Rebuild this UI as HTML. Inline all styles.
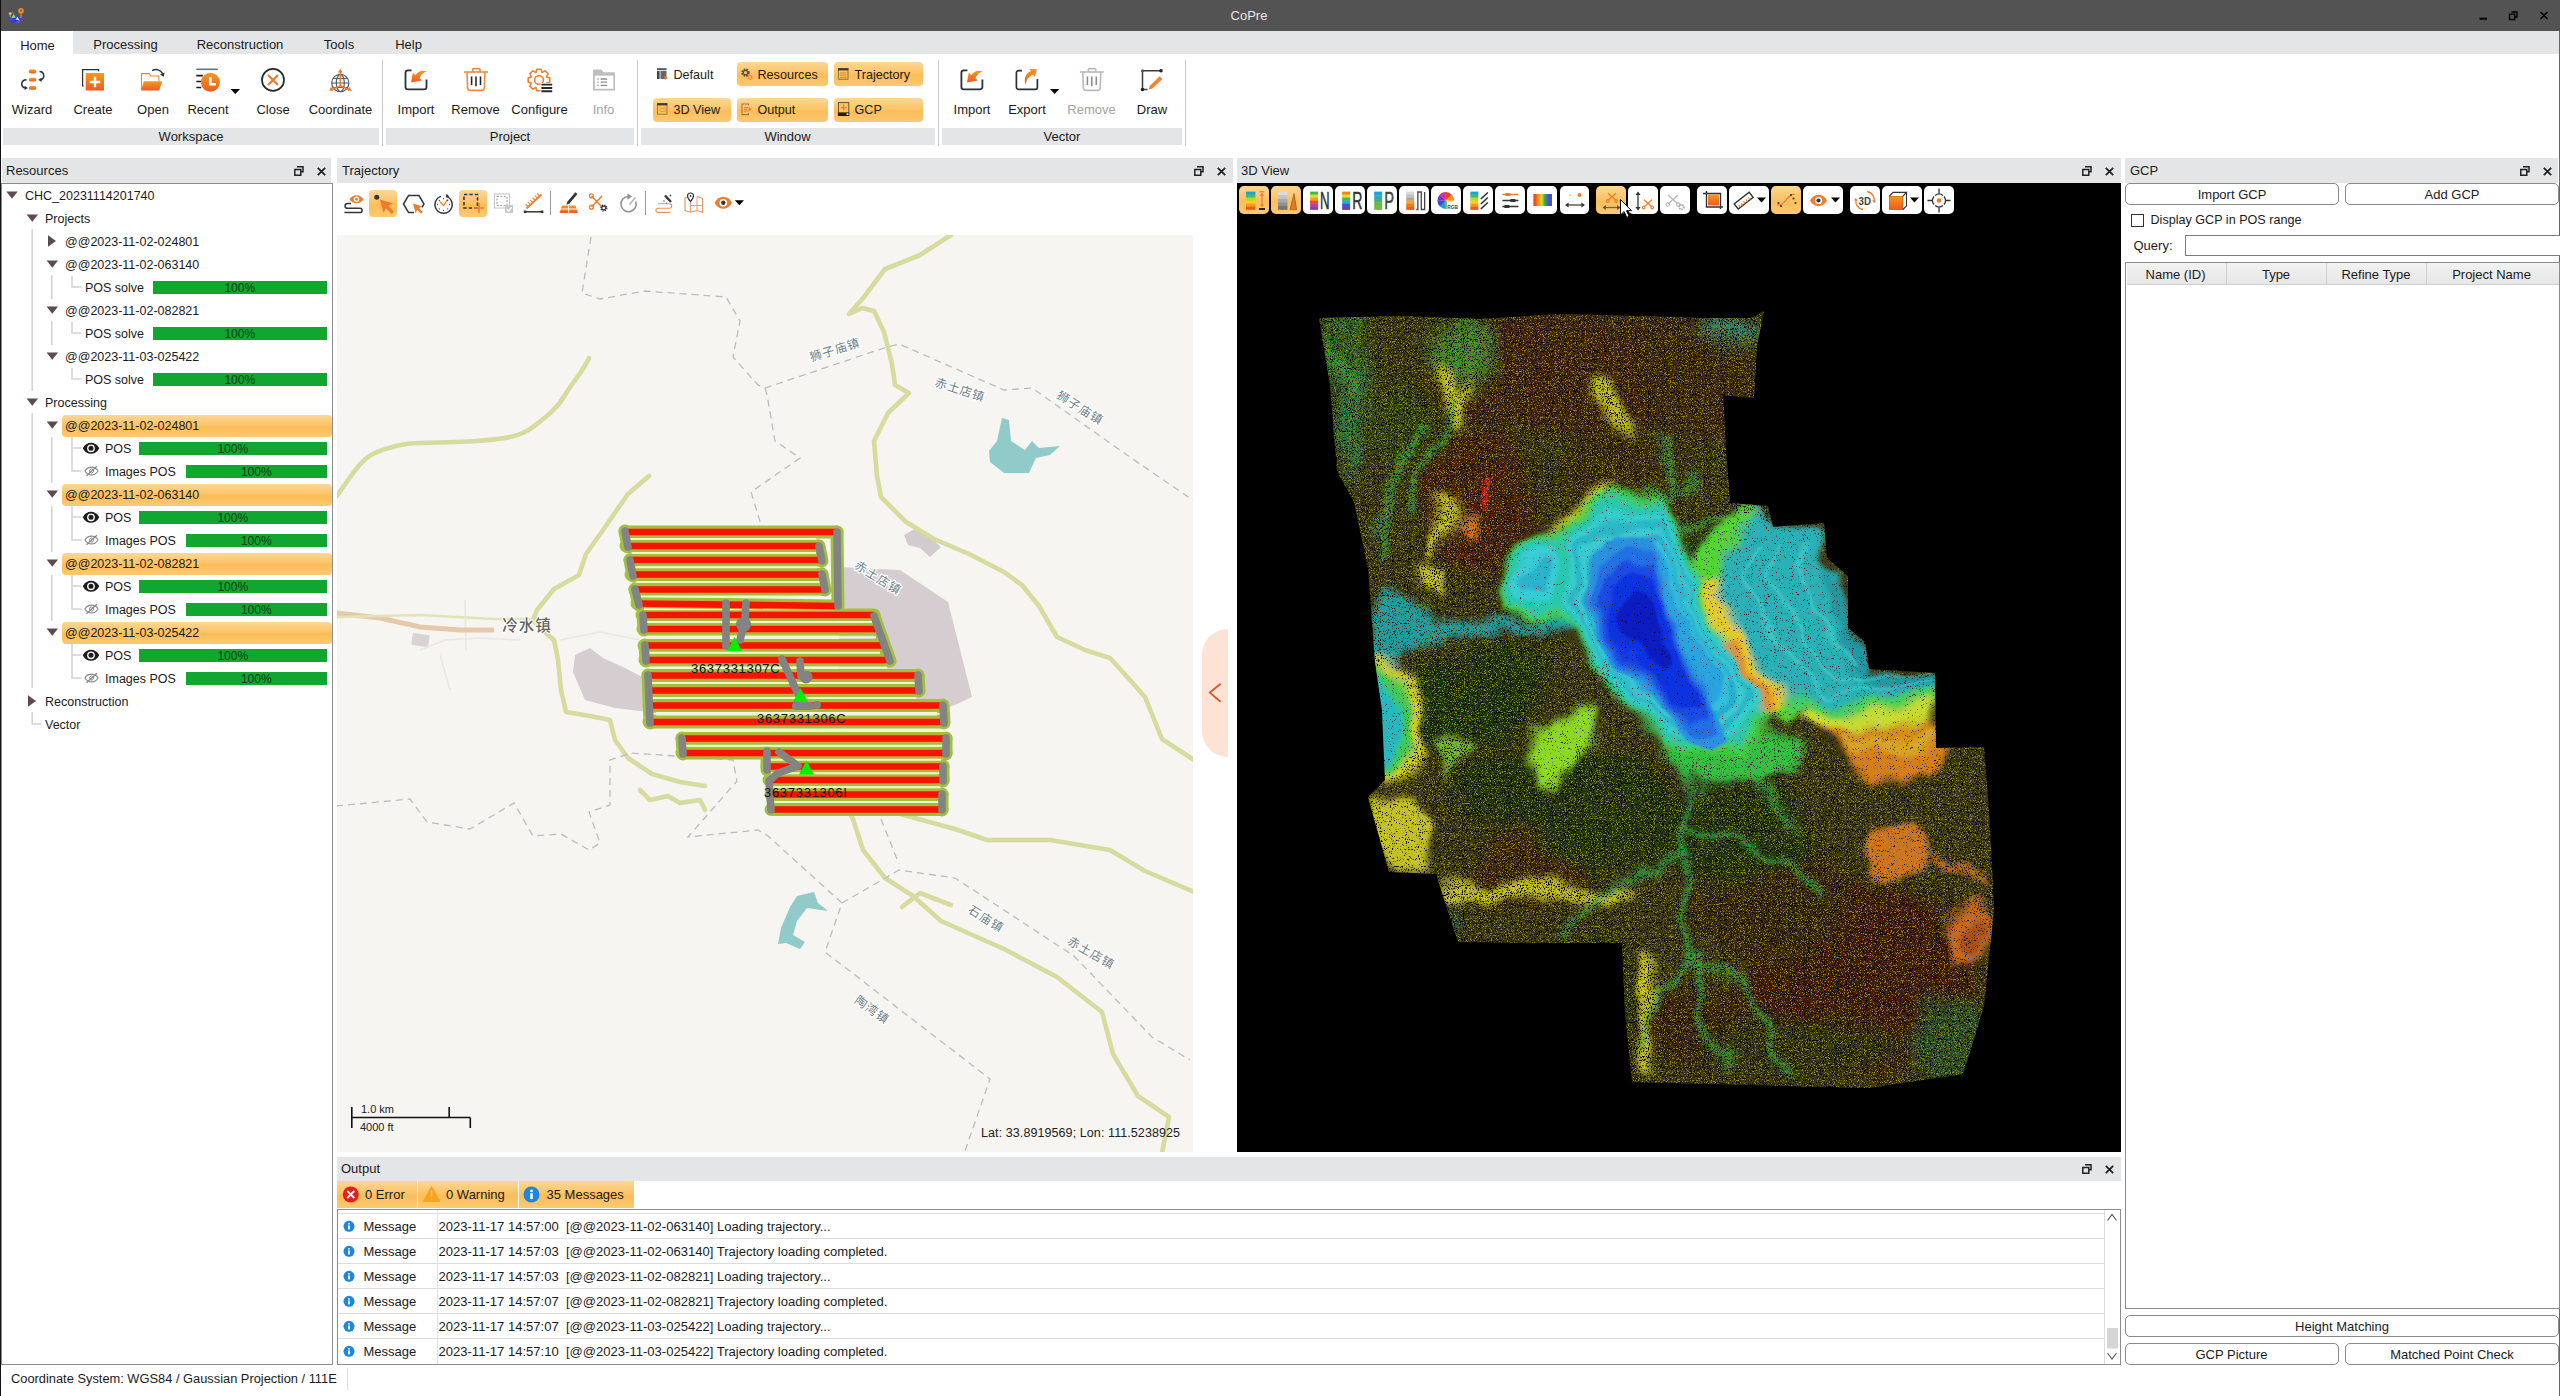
<!DOCTYPE html>
<html lang="en"><head><meta charset="utf-8"><title>CoPre</title>
<style>
html,body{margin:0;padding:0;}
html,body{width:2560px;height:1396px;overflow:hidden;}
body{background:#fff;font-family:"Liberation Sans","Noto Sans CJK SC",sans-serif;font-size:13px;color:#1b1b1b;}
#root{position:relative;left:0;top:0;width:2560px;height:1396px;overflow:hidden;background:#fff;}
div{position:absolute;box-sizing:border-box;}
svg{position:absolute;overflow:visible;}
.t{white-space:pre;}
.or{background:linear-gradient(#fdd796 0%,#fcc469 45%,#fbbd58 55%,#fcc973 100%);border-radius:4px;}
.btn{border:1px solid #8a8a8a;border-radius:5px;background:#fff;text-align:center;}
</style></head>
<body>
<div id="root">
<div style="left:0px;top:0px;width:2560px;height:30.5px;background:#535353;"></div><div class="t" style="left:1049px;width:400px;text-align:center;top:6px;height:20px;line-height:20px;font-size:13px;color:#e6e6e6;">CoPre</div><svg style="left:2470px;top:4px" width="86" height="24" viewBox="0 0 86 24"><path d="M9.5 14.7h7.5" stroke="#000" stroke-width="2"/><path d="M41.5 8h5.5v5h-2M39.5 10.2h5.3v5.3h-5.3z" fill="none" stroke="#000" stroke-width="1.3"/><path d="M70.5 8l7 7M77.5 8l-7 7" stroke="#000" stroke-width="1.5"/></svg><svg style="left:6px;top:6px" width="22" height="20" viewBox="6 6 22 20"><defs><linearGradient id="ai" x1="0" y1="0" x2="1" y2="1"><stop offset="0" stop-color="#3a6ae8"/><stop offset="0.6" stop-color="#3038d0"/><stop offset="1" stop-color="#9a70f0"/></linearGradient></defs><path d="M8 19.5L12.5 15.5L15 17L18 15.5L23.5 19L18.5 23L12 22.5Z" fill="url(#ai)"/><path d="M11.5 18L13.6 14L15.6 17.5Z" fill="#8fe08a"/><path d="M15.5 19.5L17.6 16.8L19.6 20.5Z" fill="#bfe4ff"/><circle cx="21" cy="10.8" r="2.9" fill="#e8862e"/><circle cx="21" cy="10.6" r="1" fill="#8a5a30"/><path d="M21 13v5" stroke="#e8862e" stroke-width="1.3"/><circle cx="10.2" cy="13.6" r="1.6" fill="#d89a5a"/><circle cx="10.2" cy="13.6" r="0.6" fill="#fff"/><path d="M10.2 15v2" stroke="#d89a5a" stroke-width="0.9"/><path d="M12.5 11.5l1.5 3" stroke="#4a9a3a" stroke-width="1"/></svg><div style="left:0px;top:31px;width:2560px;height:23px;background:#e4e5e6;"></div><div style="left:1px;top:30.5px;width:71.7px;height:23.5px;background:#fff;"></div><div class="t" style="left:-162.5px;width:400px;text-align:center;top:35.5px;height:20px;line-height:20px;font-size:13px;color:#1b1b1b;">Home</div><div class="t" style="left:-74.5px;width:400px;text-align:center;top:34.5px;height:20px;line-height:20px;font-size:13px;color:#1b1b1b;">Processing</div><div class="t" style="left:40px;width:400px;text-align:center;top:34.5px;height:20px;line-height:20px;font-size:13px;color:#1b1b1b;">Reconstruction</div><div class="t" style="left:139px;width:400px;text-align:center;top:34.5px;height:20px;line-height:20px;font-size:13px;color:#1b1b1b;">Tools</div><div class="t" style="left:208.5px;width:400px;text-align:center;top:34.5px;height:20px;line-height:20px;font-size:13px;color:#1b1b1b;">Help</div><div style="left:0px;top:0px;width:1px;height:1396px;background:#111;"></div><div style="left:2559px;top:30.5px;width:1px;height:1365.5px;background:#666;"></div>
<div style="left:3px;top:128px;width:376px;height:17px;background:#e4e5e6;"></div><div class="t" style="left:-9px;width:400px;text-align:center;top:126.5px;height:20px;line-height:20px;font-size:13px;color:#1b1b1b;">Workspace</div><div style="left:386px;top:128px;width:248px;height:17px;background:#e4e5e6;"></div><div class="t" style="left:310px;width:400px;text-align:center;top:126.5px;height:20px;line-height:20px;font-size:13px;color:#1b1b1b;">Project</div><div style="left:641px;top:128px;width:294px;height:17px;background:#e4e5e6;"></div><div class="t" style="left:587.5px;width:400px;text-align:center;top:126.5px;height:20px;line-height:20px;font-size:13px;color:#1b1b1b;">Window</div><div style="left:942px;top:128px;width:240px;height:17px;background:#e4e5e6;"></div><div class="t" style="left:862px;width:400px;text-align:center;top:126.5px;height:20px;line-height:20px;font-size:13px;color:#1b1b1b;">Vector</div><div style="left:382px;top:60px;width:1px;height:86px;background:#c9c9c9;"></div><div style="left:637px;top:60px;width:1px;height:86px;background:#c9c9c9;"></div><div style="left:938px;top:60px;width:1px;height:86px;background:#c9c9c9;"></div><div style="left:1185px;top:60px;width:1px;height:86px;background:#c9c9c9;"></div><div class="t" style="left:-168px;width:400px;text-align:center;top:99.5px;height:20px;line-height:20px;font-size:13px;color:#1b1b1b;">Wizard</div><div class="t" style="left:-107px;width:400px;text-align:center;top:99.5px;height:20px;line-height:20px;font-size:13px;color:#1b1b1b;">Create</div><div class="t" style="left:-47px;width:400px;text-align:center;top:99.5px;height:20px;line-height:20px;font-size:13px;color:#1b1b1b;">Open</div><div class="t" style="left:8px;width:400px;text-align:center;top:99.5px;height:20px;line-height:20px;font-size:13px;color:#1b1b1b;">Recent</div><div class="t" style="left:73px;width:400px;text-align:center;top:99.5px;height:20px;line-height:20px;font-size:13px;color:#1b1b1b;">Close</div><div class="t" style="left:140.5px;width:400px;text-align:center;top:99.5px;height:20px;line-height:20px;font-size:13px;color:#1b1b1b;">Coordinate</div><div class="t" style="left:216px;width:400px;text-align:center;top:99.5px;height:20px;line-height:20px;font-size:13px;color:#1b1b1b;">Import</div><div class="t" style="left:275.5px;width:400px;text-align:center;top:99.5px;height:20px;line-height:20px;font-size:13px;color:#1b1b1b;">Remove</div><div class="t" style="left:339.5px;width:400px;text-align:center;top:99.5px;height:20px;line-height:20px;font-size:13px;color:#1b1b1b;">Configure</div><div class="t" style="left:403.5px;width:400px;text-align:center;top:99.5px;height:20px;line-height:20px;font-size:13px;color:#a3a3a3;">Info</div><div class="t" style="left:772px;width:400px;text-align:center;top:99.5px;height:20px;line-height:20px;font-size:13px;color:#1b1b1b;">Import</div><div class="t" style="left:827px;width:400px;text-align:center;top:99.5px;height:20px;line-height:20px;font-size:13px;color:#1b1b1b;">Export</div><div class="t" style="left:891.5px;width:400px;text-align:center;top:99.5px;height:20px;line-height:20px;font-size:13px;color:#a3a3a3;">Remove</div><div class="t" style="left:952px;width:400px;text-align:center;top:99.5px;height:20px;line-height:20px;font-size:13px;color:#1b1b1b;">Draw</div><div class="or" style="left:737px;top:62px;width:91px;height:24px;"></div><div class="or" style="left:834px;top:62px;width:89px;height:24px;"></div><div class="or" style="left:653px;top:97.5px;width:78px;height:24px;"></div><div class="or" style="left:737px;top:97.5px;width:91px;height:24px;"></div><div class="or" style="left:834px;top:97.5px;width:89px;height:24px;"></div><div class="t" style="left:673.5px;top:64.5px;height:20px;line-height:20px;font-size:12.6px;color:#1b1b1b;">Default</div><div class="t" style="left:757.5px;top:64.5px;height:20px;line-height:20px;font-size:12.6px;color:#1b1b1b;">Resources</div><div class="t" style="left:854.5px;top:64.5px;height:20px;line-height:20px;font-size:12.6px;color:#1b1b1b;">Trajectory</div><div class="t" style="left:673.5px;top:99.5px;height:20px;line-height:20px;font-size:12.6px;color:#1b1b1b;">3D View</div><div class="t" style="left:757.5px;top:99.5px;height:20px;line-height:20px;font-size:12.6px;color:#1b1b1b;">Output</div><div class="t" style="left:854.5px;top:99.5px;height:20px;line-height:20px;font-size:12.6px;color:#1b1b1b;">GCP</div><svg style="left:0;top:55px" width="1200" height="72" viewBox="0 55 1200 72"><defs><linearGradient id="og" x1="0" y1="0" x2="0" y2="1"><stop offset="0" stop-color="#f39a1f"/><stop offset="1" stop-color="#f15a22"/></linearGradient></defs><rect x="28.8" y="69.6" width="7.6" height="3.8" rx="1.9" fill="url(#og)"/><rect x="28.8" y="77.8" width="7.6" height="3.8" rx="1.9" fill="url(#og)"/><rect x="28.8" y="86" width="7.6" height="3.8" rx="1.9" fill="url(#og)"/><path d="M39.5 71.6c5.5 0.2 5.8 8 0.3 8.2" fill="none" stroke="#2b2f36" stroke-width="1.5"/><path d="M38.3 79.8l3.2-2.1v4.2z" fill="#2b2f36"/><path d="M26.6 79.7c-6.2 0.2-6.4 8-1.2 8.2" fill="none" stroke="#2b2f36" stroke-width="1.5"/><path d="M27.8 87.9l-3.2-2.1v4.2z" fill="#2b2f36"/><path d="M83.8 86H82.6V69.6h16v1.6" fill="none" stroke="#2b2f36" stroke-width="1.2"/><rect x="85.7" y="73" width="18.3" height="17.5" fill="url(#og)"/><path d="M95 76.8v10.4M89.8 82h10.4" stroke="#fff" stroke-width="2.4"/><path d="M141.5 90.2V73.6h7.6l1.8 2.4h8v5" fill="#fff" stroke="#e9892c" stroke-width="1.1"/><path d="M141.2 90.4l2.6-9.2h18.4l-3 9.2z" fill="url(#og)"/><path d="M152.2 70.6c4-2.2 8.4-0.8 10.4 3" fill="none" stroke="#2b2f36" stroke-width="1.5"/><path d="M164.6 72.6l-0.8 4.2-3.8-2.2z" fill="#2b2f36"/><path d="M196.3 69.3h21.5" stroke="#6b7178" stroke-width="1.6"/><path d="M196.3 75.6h6.5M196.3 81.5h5M196.3 87.5h5" stroke="#1b1b1b" stroke-width="1.6"/><circle cx="210.4" cy="82.3" r="9.5" fill="url(#og)"/><path d="M210.3 77v7.2h5.6" fill="none" stroke="#fff" stroke-width="2.6"/><path d="M230.6 89h9.4l-4.7 5z" fill="#000"/><circle cx="273" cy="79.9" r="11" fill="none" stroke="#26282c" stroke-width="1.7"/><path d="M268 75l10 10M278 75l-10 10" stroke="#f0792a" stroke-width="2.2"/><g fill="none" stroke="#515c6b" stroke-width="1.2"><circle cx="340.3" cy="83" r="8.6"/><ellipse cx="340.3" cy="83" rx="4" ry="8.6"/><path d="M331.8 83h17M333 78.5h14.6M333 87.5h14.6"/></g><g stroke="#f0792a" stroke-width="1.6" fill="#f0792a"><path d="M340.3 86V71"/><path d="M340.3 69l2.4 3.6h-4.8z" stroke="none"/><path d="M340.3 86l-9 3.6"/><path d="M329 90.6l2.2-3.8 1.8 4.2z" stroke="none"/><path d="M340.3 86l9 3.6"/><path d="M351.6 90.6l-2.2-3.8-1.8 4.2z" stroke="none"/></g><path d="M411.5 70.4h-3.6a2.4 2.4 0 0 0-2.4 2.4v14.2a2.4 2.4 0 0 0 2.4 2.4h16.2a2.4 2.4 0 0 0 2.4-2.4V79.5" fill="none" stroke="#2b2f36" stroke-width="1.8"/><path d="M411.1 82.6L412.8 72.6L415.4 75.2C418 71 422.5 69.6 426.8 71.6C423 72.6 420.8 75 419.6 78.3L422 80.5Z" fill="url(#og)"/><path d="M967.4 70.4h-3.6a2.4 2.4 0 0 0-2.4 2.4v14.2a2.4 2.4 0 0 0 2.4 2.4h16.2a2.4 2.4 0 0 0 2.4-2.4V79.5" fill="none" stroke="#2b2f36" stroke-width="1.8"/><path d="M967 82.6L968.7 72.6L971.3 75.2C973.9 71 978.4 69.6 982.7 71.6C978.9 72.6 976.7 75 975.5 78.3L977.9 80.5Z" fill="url(#og)"/><path d="M1022 70.6h-3.4a2.2 2.2 0 0 0-2.2 2.2v14.4a2.2 2.2 0 0 0 2.2 2.2h16.6a2.2 2.2 0 0 0 2.2-2.2V79" fill="none" stroke="#2b2f36" stroke-width="1.7"/><path d="M1037 69.2l-7.8-0.4 1.6 2.2c-4.6 2-7.8 7-5 14 0.4-5.4 3-8.6 7.4-10.4l1.6 2.4z" fill="url(#og)"/><path d="M1050 89h9.2l-4.6 4.9z" fill="#000"/><g fill="none" stroke="#ee8a3a" stroke-width="1.6"><path d="M464 72h24"/><path d="M472.6 72v-2.2a1.2 1.2 0 0 1 1.2-1.2h5a1.2 1.2 0 0 1 1.2 1.2V72"/><path d="M467 72l0.6 16a2.6 2.6 0 0 0 2.6 2.4h11.6a2.6 2.6 0 0 0 2.6-2.4l0.6-16"/></g><path d="M471.6 76.6v8.4M476 76.6v9.6M480.5 76.6v8.4" stroke="#26282c" stroke-width="1.6"/><g fill="none" stroke="#b9b9b9" stroke-width="1.6"><path d="M1079.8 72h24"/><path d="M1088.4 72v-2.2a1.2 1.2 0 0 1 1.2-1.2h5a1.2 1.2 0 0 1 1.2 1.2V72"/><path d="M1082.8 72l0.6 16a2.6 2.6 0 0 0 2.6 2.4h11.6a2.6 2.6 0 0 0 2.6-2.4l0.6-16"/></g><path d="M1087.4 76.6v8.4M1091.8 76.6v9.6M1096.3 76.6v8.4" stroke="#8e8e8e" stroke-width="1.6"/><clipPath id="gc"><path d="M520 60h40v23h-19.5v12H520z"/></clipPath><g clip-path="url(#gc)"><path d="M549.8 77.8 L549.8 82.2 L546.8 82.9 L546.6 83.4 L548.2 86.1 L545.1 89.2 L542.4 87.6 L541.9 87.8 L541.2 90.8 L536.8 90.8 L536.1 87.8 L535.6 87.6 L532.9 89.2 L529.8 86.1 L531.4 83.4 L531.2 82.9 L528.2 82.2 L528.2 77.8 L531.2 77.1 L531.4 76.6 L529.8 73.9 L532.9 70.8 L535.6 72.4 L536.1 72.2 L536.8 69.2 L541.2 69.2 L541.9 72.2 L542.4 72.4 L545.1 70.8 L548.2 73.9 L546.6 76.6 L546.8 77.1Z" fill="none" stroke="#ee8530" stroke-width="1.6" stroke-linejoin="round"/><circle cx="539" cy="80" r="4.4" fill="none" stroke="#ee8530" stroke-width="1.6"/></g><path d="M541.4 84.6h10.8M541.4 88h10.8M541.4 91.3h10.8" stroke="#26282c" stroke-width="1.9"/><path d="M593 90.6V70.6a1 1 0 0 1 1-1h7.4l2 2.6h10.6a1 1 0 0 1 1 1v17.4z" fill="#bdbdbd"/><rect x="594.8" y="75.6" width="18.6" height="13.2" fill="#fff"/><path d="M600.6 79h6.6M600.6 82.2h6.6M600.6 85.4h6.6" stroke="#8e8e8e" stroke-width="1.3"/><path d="M597.4 79h1.2M597.4 82.2h1.2M597.4 85.4h1.2" stroke="#8e8e8e" stroke-width="1.3"/><path d="M1161 70.8h-18.5v18.7h5" fill="none" stroke="#3a3d42" stroke-width="1.5"/><circle cx="1161" cy="70.8" r="1.8" fill="#222"/><circle cx="1142.5" cy="70.8" r="1.5" fill="#555"/><circle cx="1142.5" cy="89.5" r="1.8" fill="#222"/><path d="M1159.6 76.2l2.8 2.8-10 9.6-3.6 1 0.9-3.6z" fill="#ee8530"/><rect x="657" y="68.2" width="9.5" height="2" fill="#555"/><rect x="657" y="71" width="2.6" height="8" fill="#444"/><rect x="660.5" y="71" width="6" height="8" fill="#666"/><path d="M664 76l4 2-3 2z" fill="#f0792a"/><circle cx="745.5" cy="72.6" r="3.1" fill="none" stroke="#5b5345" stroke-width="2.2" stroke-dasharray="1.6 0.9"/><circle cx="745.5" cy="72.6" r="2.2" fill="none" stroke="#5b5345" stroke-width="1.2"/><circle cx="750" cy="77.2" r="1.8" fill="none" stroke="#f0792a" stroke-width="1.5" stroke-dasharray="1.1 0.7"/><rect x="838.4" y="68.6" width="9.6" height="10.6" fill="#fbc15c" stroke="#7a6a4a" stroke-width="0.9"/><rect x="838" y="68.2" width="10.4" height="2.2" fill="#3a3a3a"/><path d="M840 73h6.4M840 75.2h6.4M840 77.4h6.4" stroke="#f0792a" stroke-width="0.9"/><rect x="657.4" y="103.6" width="9.6" height="10.6" fill="#fbc15c" stroke="#8a744a" stroke-width="0.9"/><rect x="657" y="103.2" width="10.4" height="2.2" fill="#3a3a3a"/><path d="M659.5 110.5c0-2 2-3 3.5-2 1.5-1.2 3.2 0 3 1.8 0 1.6-6.5 1.8-6.5 0.2z" fill="none" stroke="#e58a2a" stroke-width="0.9"/><path d="M748.5 105.5V104h-6.5v10.6h6.5v-1.6" fill="none" stroke="#9a7a42" stroke-width="1.1"/><path d="M744 107.5h4M744 109.3h3M744 111.1h4" stroke="#f0792a" stroke-width="1"/><path d="M748.6 107l3 2.3-3 2.3z" fill="#f0792a"/><rect x="838.4" y="102.6" width="10.4" height="13" fill="#fbc15c" stroke="#5a4a32" stroke-width="0.9"/><rect x="838" y="112.4" width="11.2" height="3.6" fill="#1f1f1f"/><rect x="846.6" y="113.4" width="1.8" height="1.6" fill="#fff"/><path d="M843.6 104.6v6M840.8 107.6h5.6" stroke="#f0792a" stroke-width="1.1"/></svg>
<div style="left:2px;top:158px;width:329px;height:25px;background:#e4e5e6;"></div><div class="t" style="left:6px;top:160.5px;height:20px;line-height:20px;font-size:13px;color:#1b1b1b;">Resources</div><svg style="left:294px;top:165.5px" width="10" height="10" viewBox="0 0 10 10"><path d="M3 0.8h6v5h-2.2M0.8 3.6h6v5.6h-6z" fill="none" stroke="#222" stroke-width="1.5"/></svg><svg style="left:317px;top:166.5px" width="9" height="9" viewBox="0 0 9 9"><path d="M0.8 0.8L8.2 8.2M8.2 0.8L0.8 8.2" stroke="#222" stroke-width="1.8"/></svg><div style="left:1px;top:183px;width:332px;height:1182px;border:1px solid #8c8c8c;background:#fff;"></div><div class="or" style="left:62px;top:414.5px;width:270px;height:22px;"></div><div class="or" style="left:62px;top:483.5px;width:270px;height:22px;"></div><div class="or" style="left:62px;top:552.5px;width:270px;height:22px;"></div><div class="or" style="left:62px;top:621.5px;width:270px;height:22px;"></div><svg style="left:0;top:183px" width="335" height="560" viewBox="0 183 335 560"><g stroke="#d2d2d2" stroke-width="1.5" fill="none"><path d="M32.2 229v162"/><path d="M32.2 413v275"/><path d="M32.2 712v12h9"/><path d="M51.8 275v24"/><path d="M51.8 321v24"/><path d="M72 276v11h9.5"/><path d="M72 322v11h9.5"/><path d="M72 368v11h9.5"/><path d="M51.8 437v46"/><path d="M51.8 506v46"/><path d="M51.8 575v46"/><path d="M72 437v34h9.5M72 448h9.5"/><path d="M72 506v34h9.5M72 517h9.5"/><path d="M72 575v34h9.5M72 586h9.5"/><path d="M72 644v34h9.5M72 655h9.5"/></g><path d="M6.3 191.4h11.4l-5.7 7.4z" fill="#5c4a4f"/><path d="M26.599999999999998 214.4h11.4l-5.7 7.4z" fill="#5c4a4f"/><path d="M48 235.2v11.6l8-5.8z" fill="#5c4a4f"/><path d="M46.599999999999994 260.4h11.4l-5.7 7.4z" fill="#5c4a4f"/><path d="M46.599999999999994 306.4h11.4l-5.7 7.4z" fill="#5c4a4f"/><path d="M46.599999999999994 352.4h11.4l-5.7 7.4z" fill="#5c4a4f"/><path d="M26.599999999999998 398.4h11.4l-5.7 7.4z" fill="#5c4a4f"/><path d="M46.599999999999994 421.4h11.4l-5.7 7.4z" fill="#5c4a4f"/><path d="M46.599999999999994 490.4h11.4l-5.7 7.4z" fill="#5c4a4f"/><path d="M46.599999999999994 559.4h11.4l-5.7 7.4z" fill="#5c4a4f"/><path d="M46.599999999999994 628.4h11.4l-5.7 7.4z" fill="#5c4a4f"/><path d="M28 695.2v11.6l8-5.8z" fill="#5c4a4f"/><path d="M82.8 448.3c3.5-7.4 12.9-7.4 16.4 0c-3.5 7.4-12.9 7.4-16.4 0z" fill="#1c1c1c"/><circle cx="91" cy="448.3" r="3.9" fill="#fff"/><circle cx="91" cy="448.3" r="2.5" fill="#1c1c1c"/><path d="M84.9 471c3-5.2 10.2-5.2 13.2 0c-3 5.2-10.2 5.2-13.2 0z" fill="none" stroke="#8a8a8a" stroke-width="1.1"/><circle cx="91.5" cy="471" r="2" fill="none" stroke="#8a8a8a" stroke-width="1"/><path d="M86.5 475.8L96.9 466.2" stroke="#8a8a8a" stroke-width="1.2"/><path d="M82.8 517.3c3.5-7.4 12.9-7.4 16.4 0c-3.5 7.4-12.9 7.4-16.4 0z" fill="#1c1c1c"/><circle cx="91" cy="517.3" r="3.9" fill="#fff"/><circle cx="91" cy="517.3" r="2.5" fill="#1c1c1c"/><path d="M84.9 540c3-5.2 10.2-5.2 13.2 0c-3 5.2-10.2 5.2-13.2 0z" fill="none" stroke="#8a8a8a" stroke-width="1.1"/><circle cx="91.5" cy="540" r="2" fill="none" stroke="#8a8a8a" stroke-width="1"/><path d="M86.5 544.8L96.9 535.2" stroke="#8a8a8a" stroke-width="1.2"/><path d="M82.8 586.3c3.5-7.4 12.9-7.4 16.4 0c-3.5 7.4-12.9 7.4-16.4 0z" fill="#1c1c1c"/><circle cx="91" cy="586.3" r="3.9" fill="#fff"/><circle cx="91" cy="586.3" r="2.5" fill="#1c1c1c"/><path d="M84.9 609c3-5.2 10.2-5.2 13.2 0c-3 5.2-10.2 5.2-13.2 0z" fill="none" stroke="#8a8a8a" stroke-width="1.1"/><circle cx="91.5" cy="609" r="2" fill="none" stroke="#8a8a8a" stroke-width="1"/><path d="M86.5 613.8L96.9 604.2" stroke="#8a8a8a" stroke-width="1.2"/><path d="M82.8 655.3c3.5-7.4 12.9-7.4 16.4 0c-3.5 7.4-12.9 7.4-16.4 0z" fill="#1c1c1c"/><circle cx="91" cy="655.3" r="3.9" fill="#fff"/><circle cx="91" cy="655.3" r="2.5" fill="#1c1c1c"/><path d="M84.9 678c3-5.2 10.2-5.2 13.2 0c-3 5.2-10.2 5.2-13.2 0z" fill="none" stroke="#8a8a8a" stroke-width="1.1"/><circle cx="91.5" cy="678" r="2" fill="none" stroke="#8a8a8a" stroke-width="1"/><path d="M86.5 682.8L96.9 673.2" stroke="#8a8a8a" stroke-width="1.2"/></svg><div class="t" style="left:25px;top:185.9px;height:20px;line-height:20px;font-size:12.5px;color:#1b1b1b;">CHC_20231114201740</div><div class="t" style="left:45px;top:208.9px;height:20px;line-height:20px;font-size:12.5px;color:#1b1b1b;">Projects</div><div class="t" style="left:65px;top:231.9px;height:20px;line-height:20px;font-size:12.5px;color:#1b1b1b;">@@2023-11-02-024801</div><div class="t" style="left:65px;top:254.89999999999998px;height:20px;line-height:20px;font-size:12.5px;color:#1b1b1b;">@@2023-11-02-063140</div><div class="t" style="left:85px;top:278.4px;height:20px;line-height:20px;font-size:12.5px;color:#1b1b1b;">POS solve</div><div style="left:152.5px;top:280.5px;width:174.5px;height:13px;background:#10a62f;"></div><div class="t" style="left:39.75px;width:400px;text-align:center;top:277.5px;height:20px;line-height:20px;font-size:12px;color:#0a3a14;">100%</div><div class="t" style="left:65px;top:300.9px;height:20px;line-height:20px;font-size:12.5px;color:#1b1b1b;">@@2023-11-02-082821</div><div class="t" style="left:85px;top:324.4px;height:20px;line-height:20px;font-size:12.5px;color:#1b1b1b;">POS solve</div><div style="left:152.5px;top:326.5px;width:174.5px;height:13px;background:#10a62f;"></div><div class="t" style="left:39.75px;width:400px;text-align:center;top:323.5px;height:20px;line-height:20px;font-size:12px;color:#0a3a14;">100%</div><div class="t" style="left:65px;top:346.9px;height:20px;line-height:20px;font-size:12.5px;color:#1b1b1b;">@@2023-11-03-025422</div><div class="t" style="left:85px;top:370.4px;height:20px;line-height:20px;font-size:12.5px;color:#1b1b1b;">POS solve</div><div style="left:152.5px;top:372.5px;width:174.5px;height:13px;background:#10a62f;"></div><div class="t" style="left:39.75px;width:400px;text-align:center;top:369.5px;height:20px;line-height:20px;font-size:12px;color:#0a3a14;">100%</div><div class="t" style="left:45px;top:392.9px;height:20px;line-height:20px;font-size:12.5px;color:#1b1b1b;">Processing</div><div class="t" style="left:65px;top:415.9px;height:20px;line-height:20px;font-size:12.5px;color:#1b1b1b;">@@2023-11-02-024801</div><div class="t" style="left:105px;top:439.4px;height:20px;line-height:20px;font-size:12.5px;color:#1b1b1b;">POS</div><div style="left:138.5px;top:441.5px;width:188.5px;height:13px;background:#10a62f;"></div><div class="t" style="left:32.75px;width:400px;text-align:center;top:438.5px;height:20px;line-height:20px;font-size:12px;color:#0a3a14;">100%</div><div class="t" style="left:105px;top:462.4px;height:20px;line-height:20px;font-size:12.5px;color:#1b1b1b;">Images POS</div><div style="left:185.5px;top:464.5px;width:141.5px;height:13px;background:#10a62f;"></div><div class="t" style="left:56.25px;width:400px;text-align:center;top:461.5px;height:20px;line-height:20px;font-size:12px;color:#0a3a14;">100%</div><div class="t" style="left:65px;top:484.9px;height:20px;line-height:20px;font-size:12.5px;color:#1b1b1b;">@@2023-11-02-063140</div><div class="t" style="left:105px;top:508.4px;height:20px;line-height:20px;font-size:12.5px;color:#1b1b1b;">POS</div><div style="left:138.5px;top:510.5px;width:188.5px;height:13px;background:#10a62f;"></div><div class="t" style="left:32.75px;width:400px;text-align:center;top:507.5px;height:20px;line-height:20px;font-size:12px;color:#0a3a14;">100%</div><div class="t" style="left:105px;top:531.4px;height:20px;line-height:20px;font-size:12.5px;color:#1b1b1b;">Images POS</div><div style="left:185.5px;top:533.5px;width:141.5px;height:13px;background:#10a62f;"></div><div class="t" style="left:56.25px;width:400px;text-align:center;top:530.5px;height:20px;line-height:20px;font-size:12px;color:#0a3a14;">100%</div><div class="t" style="left:65px;top:553.9px;height:20px;line-height:20px;font-size:12.5px;color:#1b1b1b;">@@2023-11-02-082821</div><div class="t" style="left:105px;top:577.4px;height:20px;line-height:20px;font-size:12.5px;color:#1b1b1b;">POS</div><div style="left:138.5px;top:579.5px;width:188.5px;height:13px;background:#10a62f;"></div><div class="t" style="left:32.75px;width:400px;text-align:center;top:576.5px;height:20px;line-height:20px;font-size:12px;color:#0a3a14;">100%</div><div class="t" style="left:105px;top:600.4px;height:20px;line-height:20px;font-size:12.5px;color:#1b1b1b;">Images POS</div><div style="left:185.5px;top:602.5px;width:141.5px;height:13px;background:#10a62f;"></div><div class="t" style="left:56.25px;width:400px;text-align:center;top:599.5px;height:20px;line-height:20px;font-size:12px;color:#0a3a14;">100%</div><div class="t" style="left:65px;top:622.9px;height:20px;line-height:20px;font-size:12.5px;color:#1b1b1b;">@@2023-11-03-025422</div><div class="t" style="left:105px;top:646.4px;height:20px;line-height:20px;font-size:12.5px;color:#1b1b1b;">POS</div><div style="left:138.5px;top:648.5px;width:188.5px;height:13px;background:#10a62f;"></div><div class="t" style="left:32.75px;width:400px;text-align:center;top:645.5px;height:20px;line-height:20px;font-size:12px;color:#0a3a14;">100%</div><div class="t" style="left:105px;top:669.4px;height:20px;line-height:20px;font-size:12.5px;color:#1b1b1b;">Images POS</div><div style="left:185.5px;top:671.5px;width:141.5px;height:13px;background:#10a62f;"></div><div class="t" style="left:56.25px;width:400px;text-align:center;top:668.5px;height:20px;line-height:20px;font-size:12px;color:#0a3a14;">100%</div><div class="t" style="left:45px;top:691.9px;height:20px;line-height:20px;font-size:12.5px;color:#1b1b1b;">Reconstruction</div><div class="t" style="left:45px;top:714.9px;height:20px;line-height:20px;font-size:12.5px;color:#1b1b1b;">Vector</div>
<div style="left:337px;top:158px;width:896px;height:25px;background:#e4e5e6;"></div><div class="t" style="left:342px;top:160.5px;height:20px;line-height:20px;font-size:13px;color:#1b1b1b;">Trajectory</div><svg style="left:1194px;top:165.5px" width="10" height="10" viewBox="0 0 10 10"><path d="M3 0.8h6v5h-2.2M0.8 3.6h6v5.6h-6z" fill="none" stroke="#222" stroke-width="1.5"/></svg><svg style="left:1217px;top:166.5px" width="9" height="9" viewBox="0 0 9 9"><path d="M0.8 0.8L8.2 8.2M8.2 0.8L0.8 8.2" stroke="#222" stroke-width="1.8"/></svg><div class="or" style="left:369px;top:189.5px;width:27.5px;height:27px;"></div><div class="or" style="left:459px;top:189.5px;width:27.5px;height:27px;"></div><svg style="left:337px;top:185px" width="420" height="36" viewBox="337 185 420 36"><defs><linearGradient id="og2" x1="0" y1="0" x2="0" y2="1"><stop offset="0" stop-color="#f39a1f"/><stop offset="1" stop-color="#f15a22"/></linearGradient></defs><path d="M349.5 199.2c3.2-5.4 10.8-5.4 14 0c-3.2 5.4-10.8 5.4-14 0z" fill="#ee7d2b"/><circle cx="356.5" cy="199.2" r="2.7" fill="#fff"/><circle cx="356.5" cy="199.2" r="1.5" fill="#ee7d2b"/><path d="M351 203.5h-3.5a2.4 2.4 0 0 0 0 4.8h12.5a2.1 2.1 0 0 1 0 4.2h-15.5" fill="none" stroke="#33363b" stroke-width="1.5"/><circle cx="376.8" cy="197.2" r="2.5" fill="#33363b"/><path d="M379.8 199.5l13.5 4-5 2.2 5.8 6-2.4 2.3-5.8-6-2.3 4.9z" fill="#ee7d2b"/><path d="M414 212.5h-5.5l-5-8.5 5-8.5h10.5l5 8.5-2 3.3" fill="none" stroke="#33363b" stroke-width="1.5"/><path d="M413 203.5l9.5 3-3.5 1.6 3.8 4-1.8 1.7-3.8-4-1.6 3.5z" fill="#ee7d2b"/><path d="M441 196.4a8.6 8.6 0 1 0 5.2 0" fill="none" stroke="#33363b" stroke-width="1.5"/><path d="M446.5 193.8l3 2.6-3.8 1.2z" fill="#33363b"/><path d="M439.5 201.5l4 4 4.2-6.2" fill="none" stroke="#ee7d2b" stroke-width="1.3"/><circle cx="449.5" cy="204.6" r="0.6" fill="#33363b"/><circle cx="447.7" cy="208.8" r="0.6" fill="#33363b"/><circle cx="443.5" cy="210.6" r="0.6" fill="#33363b"/><circle cx="439.3" cy="208.8" r="0.6" fill="#33363b"/><circle cx="437.5" cy="204.6" r="0.6" fill="#33363b"/><circle cx="439.3" cy="200.4" r="0.6" fill="#33363b"/><circle cx="443.5" cy="198.6" r="0.6" fill="#33363b"/><circle cx="447.7" cy="200.4" r="0.6" fill="#33363b"/><rect x="464" y="194.5" width="13.5" height="13.5" fill="none" stroke="#33363b" stroke-width="1.6" stroke-dasharray="3.4 2"/><path d="M479 203v10M474 208h10" stroke="#ee7d2b" stroke-width="1.5"/><rect x="494.5" y="194" width="15" height="14" fill="#fff" stroke="#c4c4c4" stroke-width="1"/><rect x="497" y="196.5" width="10" height="9" fill="none" stroke="#a8a8a8" stroke-width="1.2" stroke-dasharray="2 1.4"/><rect x="505" y="205" width="8" height="8" fill="#c9c9c9"/><path d="M506.6 209l2 2 3-3.6" fill="none" stroke="#fff" stroke-width="1.2"/><path d="M526.5 208.5l15-14" stroke="#ee7d2b" stroke-width="1.8"/><path d="M528 206.6l-2.3-2.5M530.3 204.5l-2.3-2.5M532.6 202.3l-2.3-2.5M534.9 200.2l-2.3-2.5M537.2 198l-2.3-2.5M539.5 195.9l-2.3-2.5" stroke="#ee7d2b" stroke-width="1.1"/><path d="M524.5 211.8h18.5" stroke="#33363b" stroke-width="1.5"/><rect x="523.8" y="210.5" width="2.6" height="2.6" fill="#33363b"/><rect x="540.8" y="210.5" width="2.6" height="2.6" fill="#33363b"/><path d="M550.5 191v24M645.5 191v24" stroke="#9a9a9a" stroke-width="1"/><path d="M562 205.5h13.5l2.5 7.5h-18.5z" fill="url(#og2)"/><path d="M568.7 205.5v7.5M560.6 209h17" stroke="#fff" stroke-width="1"/><path d="M577.5 194l-8 9.5-3 1.2 0.8-3 8-9.5z" fill="#33363b"/><path d="M591.5 196l10.5 11M602 196l-10.5 11" stroke="#ee7d2b" stroke-width="1.6"/><circle cx="591.5" cy="195.8" r="2" fill="none" stroke="#ee7d2b" stroke-width="1.3"/><circle cx="591.5" cy="207.2" r="2" fill="none" stroke="#ee7d2b" stroke-width="1.3"/><circle cx="603.8" cy="208" r="2.7" fill="none" stroke="#33363b" stroke-width="1.8" stroke-dasharray="1.2 0.92"/><circle cx="603.8" cy="208" r="1.9" fill="none" stroke="#33363b" stroke-width="1.1"/><path d="M628.5 196.5a7.6 7.6 0 1 0 7.2 5" fill="none" stroke="#8e8e8e" stroke-width="1.5"/><path d="M627.5 193.2l4.5 3.3-4.5 3.3z" fill="#8e8e8e"/><path d="M636 198l-5.5 6.5-1.5 0.5 0.3-1.6 5.5-6.5z" fill="#b5b5b5"/><path d="M658 203.8h11.5a2.2 2.2 0 0 1 0 4.4h-11.5a2.1 2.1 0 0 0 0 4.2h12.5" fill="none" stroke="#ea9360" stroke-width="1.1"/><path d="M665 195.5l6 6.5" stroke="#33363b" stroke-width="2.4"/><circle cx="670.5" cy="195.5" r="0.9" fill="#555"/><circle cx="664" cy="201" r="0.7" fill="#555"/><circle cx="666.5" cy="203" r="0.6" fill="#555"/><path d="M685 198l5-1.5M697 196.5l5.5 1.8v14l-5.5-1.8-6.5 1.8-5.5-1.8v-13" fill="none" stroke="#ea9360" stroke-width="1.1"/><path d="M690.5 201v11M697 196.5v14M690.5 205.5l12 0" fill="none" stroke="#ea9360" stroke-width="0.9"/><path d="M690.5 193a3 3 0 0 1 3 3c0 2-3 5.5-3 5.5s-3-3.5-3-5.5a3 3 0 0 1 3-3z" fill="#fff" stroke="#33363b" stroke-width="1.2"/><circle cx="690.5" cy="196" r="0.9" fill="#33363b"/><path d="M714.6 202.8c4-8 13.4-8 17.4 0c-4 8-13.4 8-17.4 0z" fill="#ee7d2b"/><circle cx="723.3" cy="202.8" r="3.8" fill="#fff"/><circle cx="723.3" cy="202.8" r="2.2" fill="#3a3340"/><path d="M734.8 200.2h9.2l-4.6 5z" fill="#000"/></svg><div style="left:1202px;top:629px;width:26px;height:127.5px;background:#fde3d3;border-radius:26px 0 0 26px;"></div><svg style="left:1206px;top:681px" width="18" height="24" viewBox="0 0 18 24"><path d="M14.6 2.8L3.8 11.6l10.8 9.2" fill="none" stroke="#d9542b" stroke-width="1.8"/></svg>
<svg style="left:337px;top:235px;overflow:hidden" width="856" height="917" viewBox="337 235 856 917"><rect x="337" y="235" width="856" height="917" fill="#f6f5f1"/><path d="M839 567L900 570L948 602L972 697L955 705L934 711L839 711Z" fill="#d6cdd1"/><path d="M575 655L590 648L603 658L625 668L648 680L648 712L615 708L585 700L573 672Z" fill="#d6cdd1"/><path d="M904 535L918 527L941 547L930 557L920 548L908 545Z" fill="#d3cccf"/><rect x="412" y="634" width="17" height="12" fill="#d9d3d6" transform="rotate(8 420 640)"/><path d="M420 650L445 640L480 638L520 640M465 600L466 650M440 655L450 690M560 640L600 632L640 640" fill="none" stroke="#e9e7e4" stroke-width="1.5"/><path d="M336 613L380 618L420 627L460 630L494 630" fill="none" stroke="#e6c9ab" stroke-width="5"/><path d="M336 617L420 615L494 619L533 619" fill="none" stroke="#dfe5b4" stroke-width="2.5"/><path d="M336 497C350 478 360 461 371 455S395 446 406 444S450 443 477 441S520 437 533 427S557 409 565 395S583 372 589 358" fill="none" stroke="#d5dc9e" stroke-width="4.6" stroke-linejoin="round" stroke-linecap="round"/><path d="M649 476L628 494L603 530L586 554L579 575L554 589L537 610L533 620L545 632L554 640L558 660L561 690L566 712L590 716L610 720L615 740L628 758L652 774L680 782L705 786" fill="none" stroke="#d5dc9e" stroke-width="4.6" stroke-linejoin="round" stroke-linecap="round"/><path d="M640 790L650 800L668 796L680 803L700 800L705 810" fill="none" stroke="#d5dc9e" stroke-width="4.6" stroke-linejoin="round" stroke-linecap="round"/><path d="M951 235L920 255L885 269L864 297L849 314L862 308L874 311L884 332L892 364L895 385L909 393L888 413L874 441L877 476L881 497L906 522L934 539L969 554L1004 572L1022 585L1039 606L1057 637L1085 650L1110 658L1130 680L1145 697L1162 739L1194 760" fill="none" stroke="#d5dc9e" stroke-width="4.6" stroke-linejoin="round" stroke-linecap="round"/><path d="M849 812L853 819L863 850L885 878L913 896L941 921L1004 949L1057 977L1102 1012L1113 1054L1138 1096L1169 1117L1162 1153" fill="none" stroke="#d5dc9e" stroke-width="4.6" stroke-linejoin="round" stroke-linecap="round"/><path d="M900 814L955 829L987 840L1050 840L1110 850L1145 871L1194 892" fill="none" stroke="#d5dc9e" stroke-width="4.6" stroke-linejoin="round" stroke-linecap="round"/><path d="M902 907L920 893L951 905" fill="none" stroke="#d5dc9e" stroke-width="4.6" stroke-linejoin="round" stroke-linecap="round"/><path d="M1002 418L1009 420L1011 441L1025 450L1032 441L1039 448L1060 446L1050 455L1036 458L1029 473L1004 473L990 462L989 451L997 441Z" fill="#90cbc9"/><path d="M797 896L814 892L818 903L828 911L807 908L797 921L793 935L805 942L800 949L786 943L778 944L781 928L790 907Z" fill="#90cbc9"/><path d="M591 237 L582 293 L600 299 L645 291 L726 297 L740 321 L733 357 L758 385 L765 388 L884 348 L899 344 L1004 390 L1032 388 L1127 455 L1194 501" fill="none" stroke="#bcbcbc" stroke-width="1.3" stroke-dasharray="7 5"/><path d="M765 388 L767 395 L775 441 L800 458 L751 492 L762 528" fill="none" stroke="#bcbcbc" stroke-width="1.3" stroke-dasharray="7 5"/><path d="M336 806 L410 799 L427 822 L470 829 L514 803 L533 836 L561 834 L589 850 L600 843 L589 812 L610 805 L610 760 L631 753 L733 760 L737 781 L688 837 L758 830 L768 836 L842 903 L825 952 L990 1079 L965 1151" fill="none" stroke="#bcbcbc" stroke-width="1.3" stroke-dasharray="7 5"/><path d="M842 903 L899 870 L955 878 L1074 956 L1152 1037 L1190 1060" fill="none" stroke="#bcbcbc" stroke-width="1.3" stroke-dasharray="7 5"/><path d="M881 819 L899 864" fill="none" stroke="#bcbcbc" stroke-width="1.3" stroke-dasharray="7 5"/><text x="835" y="354" text-anchor="middle" transform="rotate(-17 835 350)" font-size="12" font-family='"Liberation Sans","Noto Sans CJK SC",sans-serif' fill="#6c7f88" stroke="#ffffff" stroke-width="2.5" paint-order="stroke" letter-spacing="1">狮子庙镇</text><text x="960" y="394" text-anchor="middle" transform="rotate(18 960 390)" font-size="12" font-family='"Liberation Sans","Noto Sans CJK SC",sans-serif' fill="#6c7f88" stroke="#ffffff" stroke-width="2.5" paint-order="stroke" letter-spacing="1">赤土店镇</text><text x="1080" y="412" text-anchor="middle" transform="rotate(32 1080 408)" font-size="12" font-family='"Liberation Sans","Noto Sans CJK SC",sans-serif' fill="#6c7f88" stroke="#ffffff" stroke-width="2.5" paint-order="stroke" letter-spacing="1">狮子庙镇</text><text x="878" y="582" text-anchor="middle" transform="rotate(32 878 578)" font-size="12" font-family='"Liberation Sans","Noto Sans CJK SC",sans-serif' fill="#6c7f88" stroke="#ffffff" stroke-width="2.5" paint-order="stroke" letter-spacing="1">赤土店镇</text><text x="986" y="923" text-anchor="middle" transform="rotate(32 986 919)" font-size="12" font-family='"Liberation Sans","Noto Sans CJK SC",sans-serif' fill="#6c7f88" stroke="#ffffff" stroke-width="2.5" paint-order="stroke" letter-spacing="1">石庙镇</text><text x="1091" y="957" text-anchor="middle" transform="rotate(30 1091 953)" font-size="12" font-family='"Liberation Sans","Noto Sans CJK SC",sans-serif' fill="#6c7f88" stroke="#ffffff" stroke-width="2.5" paint-order="stroke" letter-spacing="1">赤土店镇</text><text x="872" y="1014" text-anchor="middle" transform="rotate(35 872 1010)" font-size="12" font-family='"Liberation Sans","Noto Sans CJK SC",sans-serif' fill="#6c7f88" stroke="#ffffff" stroke-width="2.5" paint-order="stroke" letter-spacing="1">陶湾镇</text><text x="527" y="630.5" text-anchor="middle" font-size="15.5" font-weight="500" font-family='"Liberation Sans","Noto Sans CJK SC",sans-serif' fill="#636363" stroke="#ffffff" stroke-width="2" paint-order="stroke" letter-spacing="1">冷水镇</text><path d="M625 532L837 532 M626 546L818 546 M630 560L819 560 M631 574.5L822 574.5 M635 589.5L823 589.5 M637 603.5L836 606 M642 615L874 615 M643 629L878 629 M644 645.5L882 645.5 M645 660L889 660 M648 675.5L918 675.5 M649 690.5L918 690.5 M649 705.5L943 705.5 M649 722L943 722 M682 738.5L946 738.5 M682 753L946 753 M767 766.5L943 766.5 M769 780L943 780 M771 794.5L942 794.5 M771 809.5L942 809.5" fill="none" stroke="#9fc040" stroke-width="13" stroke-linecap="round"/><path d="M625 531 L628 547 M630 560 L633 576 M635 589 L639 605 M643 615 L644 630 M645 645 L646 661 M648 675 L650 723 M682 738 L683 754 M767 751 L767 770 M819 546 L822 561 M822 574 L825 590 M837 532 L838 606 M874 616 L890 661 M918 675 L919 691 M943 705 L944 723 M946 738 L946 754 M943 766 L943 781 M942 794 L942 810" fill="none" stroke="#9fc040" stroke-width="13" stroke-linecap="round" stroke-linejoin="round"/><path d="M628 539L816 539M632 553L816 553M633 567.25L817 567.25M637 582L820 582M639 596.5L821 596.5M644 609.25L834 609.25M645 622L872 622M646 637.25L876 637.25M647 652.75L880 652.75M650 667.75L887 667.75M651 683L916 683M651 698L916 698M651 713.75L941 713.75M684 730.25L941 730.25M684 745.75L944 745.75M769 759.75L941 759.75M771 773.25L941 773.25M773 787.25L940 787.25M773 802L940 802" fill="none" stroke="#eef7c6" stroke-width="2.2"/><path d="M625 532L837 532 M626 546L818 546 M630 560L819 560 M631 574.5L822 574.5 M635 589.5L823 589.5 M637 603.5L836 606 M642 615L874 615 M643 629L878 629 M644 645.5L882 645.5 M645 660L889 660 M648 675.5L918 675.5 M649 690.5L918 690.5 M649 705.5L943 705.5 M649 722L943 722 M682 738.5L946 738.5 M682 753L946 753 M767 766.5L943 766.5 M769 780L943 780 M771 794.5L942 794.5 M771 809.5L942 809.5" fill="none" stroke="#d0a636" stroke-width="8.6" stroke-linecap="butt"/><path d="M625 532L837 532 M626 546L818 546 M630 560L819 560 M631 574.5L822 574.5 M635 589.5L823 589.5 M637 603.5L836 606 M642 615L874 615 M643 629L878 629 M644 645.5L882 645.5 M645 660L889 660 M648 675.5L918 675.5 M649 690.5L918 690.5 M649 705.5L943 705.5 M649 722L943 722 M682 738.5L946 738.5 M682 753L946 753 M767 766.5L943 766.5 M769 780L943 780 M771 794.5L942 794.5 M771 809.5L942 809.5" fill="none" stroke="#f31500" stroke-width="6.6" stroke-linecap="butt"/><path d="M625 531 L628 547" fill="none" stroke="#838383" stroke-width="7.6" stroke-linecap="round" stroke-linejoin="round"/><path d="M630 560 L633 576" fill="none" stroke="#838383" stroke-width="7.6" stroke-linecap="round" stroke-linejoin="round"/><path d="M635 589 L639 605" fill="none" stroke="#838383" stroke-width="7.6" stroke-linecap="round" stroke-linejoin="round"/><path d="M643 615 L644 630" fill="none" stroke="#838383" stroke-width="7.6" stroke-linecap="round" stroke-linejoin="round"/><path d="M645 645 L646 661" fill="none" stroke="#838383" stroke-width="7.6" stroke-linecap="round" stroke-linejoin="round"/><path d="M648 675 L650 723" fill="none" stroke="#838383" stroke-width="7.6" stroke-linecap="round" stroke-linejoin="round"/><path d="M682 738 L683 754" fill="none" stroke="#838383" stroke-width="7.6" stroke-linecap="round" stroke-linejoin="round"/><path d="M767 751 L767 770" fill="none" stroke="#838383" stroke-width="7.6" stroke-linecap="round" stroke-linejoin="round"/><path d="M819 546 L822 561" fill="none" stroke="#838383" stroke-width="7.6" stroke-linecap="round" stroke-linejoin="round"/><path d="M822 574 L825 590" fill="none" stroke="#838383" stroke-width="7.6" stroke-linecap="round" stroke-linejoin="round"/><path d="M837 532 L838 606" fill="none" stroke="#838383" stroke-width="7.6" stroke-linecap="round" stroke-linejoin="round"/><path d="M874 616 L890 661" fill="none" stroke="#838383" stroke-width="7.6" stroke-linecap="round" stroke-linejoin="round"/><path d="M918 675 L919 691" fill="none" stroke="#838383" stroke-width="7.6" stroke-linecap="round" stroke-linejoin="round"/><path d="M943 705 L944 723" fill="none" stroke="#838383" stroke-width="7.6" stroke-linecap="round" stroke-linejoin="round"/><path d="M946 738 L946 754" fill="none" stroke="#838383" stroke-width="7.6" stroke-linecap="round" stroke-linejoin="round"/><path d="M943 766 L943 781" fill="none" stroke="#838383" stroke-width="7.6" stroke-linecap="round" stroke-linejoin="round"/><path d="M942 794 L942 810" fill="none" stroke="#838383" stroke-width="7.6" stroke-linecap="round" stroke-linejoin="round"/><path d="M726 603 L726 646" fill="none" stroke="#838383" stroke-width="7.6" stroke-linecap="round" stroke-linejoin="round"/><path d="M746 603 L745 620 L740 640" fill="none" stroke="#838383" stroke-width="7.6" stroke-linecap="round" stroke-linejoin="round"/><path d="M782 659 L798 694" fill="none" stroke="#838383" stroke-width="7.6" stroke-linecap="round" stroke-linejoin="round"/><path d="M800 661 L801 676" fill="none" stroke="#838383" stroke-width="7.6" stroke-linecap="round" stroke-linejoin="round"/><path d="M779 752 L798 766 L778 773 L769 781 L771 810" fill="none" stroke="#838383" stroke-width="7.6" stroke-linecap="round" stroke-linejoin="round"/><circle cx="743.5" cy="624.5" r="7.5" fill="#838383"/><circle cx="806" cy="677" r="6.5" fill="#838383"/><circle cx="817" cy="705" r="4" fill="#838383"/><path d="M796 706h14" stroke="#838383" stroke-width="8" stroke-linecap="round"/><path d="M727 651h15l-7.5-14z" fill="#00f000"/><path d="M793 702h15l-7.5-14z" fill="#00f000"/><path d="M799 774.5h15l-7.5-14z" fill="#00f000"/><text x="691" y="672.5" font-size="13" font-family='"Liberation Sans",sans-serif' fill="#111" letter-spacing="0.7">3637331307C</text><text x="757" y="722.5" font-size="13" font-family='"Liberation Sans",sans-serif' fill="#111" letter-spacing="0.7">3637331306C</text><text x="764" y="796.5" font-size="13" font-family='"Liberation Sans",sans-serif' fill="#111" letter-spacing="0.7">3637331306I</text><path d="M351.8 1107v21M351.8 1117.5h118.5M449.2 1107v10.5M470.3 1117.5v10.5" fill="none" stroke="#111" stroke-width="1.6"/><text x="361" y="1113" font-size="11" font-family='"Liberation Sans",sans-serif' fill="#222">1&#46;0 km</text><text x="360" y="1131" font-size="11" font-family='"Liberation Sans",sans-serif' fill="#222">4000 ft</text><text x="981" y="1137" font-size="12.5" font-family='"Liberation Sans",sans-serif' fill="#222" textLength="199">Lat: 33.8919569; Lon: 111.5238925</text></svg>
<div style="left:1237px;top:158px;width:884px;height:25px;background:#e4e5e6;"></div><div class="t" style="left:1241px;top:160.5px;height:20px;line-height:20px;font-size:13px;color:#1b1b1b;">3D View</div><svg style="left:2082px;top:165.5px" width="10" height="10" viewBox="0 0 10 10"><path d="M3 0.8h6v5h-2.2M0.8 3.6h6v5.6h-6z" fill="none" stroke="#222" stroke-width="1.5"/></svg><svg style="left:2105px;top:166.5px" width="9" height="9" viewBox="0 0 9 9"><path d="M0.8 0.8L8.2 8.2M8.2 0.8L0.8 8.2" stroke="#222" stroke-width="1.8"/></svg><svg style="left:1237px;top:183px;overflow:hidden" width="884" height="969" viewBox="1237 183 884 969"><rect x="1237" y="183" width="884" height="969" fill="#000"/><defs><clipPath id="pc"><path d="M1319 318 L1400 316 L1480 319 L1560 314 L1640 316 L1700 318 L1751 318 L1764 311 L1757 345 L1754 398 L1723 395 L1726 450 L1730 503 L1768 506 L1773 527 L1824 523 L1827 558 L1848 576 L1848 628 L1865 642 L1869 669 L1935 673 L1936 748 L1984 747 L1990 825 L1994 909 L1984 1006 L1963 1074 L1869 1088 L1750 1085 L1632 1082 L1625 1010 L1622 943 L1540 943 L1458 942 L1436 874 L1389 872 L1368 797 L1385 780 L1382 710 L1375 662 L1368 569 L1354 502 L1337 471 L1330 384Z"/></clipPath><filter id="b8" x="-20%" y="-20%" width="140%" height="140%"><feGaussianBlur stdDeviation="8"/></filter><filter id="b4" x="-20%" y="-20%" width="140%" height="140%"><feGaussianBlur stdDeviation="3"/></filter><filter id="b2" x="-20%" y="-20%" width="140%" height="140%"><feGaussianBlur stdDeviation="1.5"/></filter><filter id="spk" filterUnits="userSpaceOnUse" x="1300" y="300" width="720" height="800"><feTurbulence type="fractalNoise" baseFrequency="0.93 0.89" numOctaves="2" seed="11" result="n"/><feGaussianBlur in="SourceAlpha" stdDeviation="4" result="d"/><feComposite in="n" in2="d" operator="arithmetic" k1="0" k2="-1" k3="-0.14" k4="1" result="m"/><feColorMatrix in="m" type="matrix" values="0 0 0 0 0  0 0 0 0 0  0 0 0 0 0  0 0 0 14 -7.9"/></filter><filter id="spy" color-interpolation-filters="sRGB" filterUnits="userSpaceOnUse" x="1300" y="300" width="720" height="800"><feTurbulence type="fractalNoise" baseFrequency="0.81 0.87" numOctaves="2" seed="5" result="n"/><feGaussianBlur in="SourceAlpha" stdDeviation="4" result="d"/><feComposite in="n" in2="d" operator="arithmetic" k1="0" k2="1" k3="-0.3" k4="0" result="m"/><feColorMatrix in="m" type="matrix" values="0 0 0 0 0.56  0 0 0 0 0.54  0 0 0 0 0.16  0 0 0 12 -6.9"/></filter><filter id="rag" filterUnits="userSpaceOnUse" x="1290" y="290" width="740" height="820"><feTurbulence type="fractalNoise" baseFrequency="0.022" numOctaves="2" seed="4" result="t"/><feDisplacementMap in="SourceGraphic" in2="t" scale="34" xChannelSelector="R" yChannelSelector="G"/></filter></defs><g clip-path="url(#pc)"><rect x="1300" y="300" width="720" height="800" fill="#403a12"/><g filter="url(#rag)"><g filter="url(#b8)"><ellipse cx="1570" cy="370" rx="150" ry="60" fill="#48260b"/><ellipse cx="1480" cy="500" rx="55" ry="70" fill="#502208"/><ellipse cx="1700" cy="370" rx="60" ry="70" fill="#452c0b"/><ellipse cx="1620" cy="460" rx="60" ry="40" fill="#432d0b"/><ellipse cx="1860" cy="980" rx="120" ry="100" fill="#491f08"/><ellipse cx="1770" cy="900" rx="80" ry="60" fill="#3f2c0b"/><ellipse cx="1530" cy="870" rx="60" ry="40" fill="#492c0b"/><ellipse cx="1700" cy="1030" rx="70" ry="40" fill="#43260b"/><ellipse cx="1345" cy="350" rx="28" ry="50" fill="#2c671e"/><ellipse cx="1400" cy="430" rx="30" ry="40" fill="#364910"/><ellipse cx="1560" cy="790" rx="110" ry="40" fill="#20370f"/><ellipse cx="1470" cy="700" rx="70" ry="45" fill="#1f3a11"/><ellipse cx="1730" cy="830" rx="80" ry="50" fill="#253a11"/><ellipse cx="1600" cy="830" rx="60" ry="40" fill="#283a10"/><ellipse cx="1800" cy="1050" rx="100" ry="30" fill="#38370f"/><ellipse cx="1950" cy="1040" rx="40" ry="40" fill="#2c5525"/><ellipse cx="1420" cy="930" rx="40" ry="20" fill="#1f6747"/><ellipse cx="1600" cy="1000" rx="40" ry="60" fill="#323b0f"/><ellipse cx="1500" cy="670" rx="50" ry="30" fill="#233b10"/><ellipse cx="1700" cy="545" rx="18" ry="25" fill="#2c4211"/><ellipse cx="1462" cy="352" rx="32" ry="34" fill="#3c8a2a"/><ellipse cx="1730" cy="332" rx="28" ry="12" fill="#2a8a6a"/><ellipse cx="1350" cy="420" rx="14" ry="60" fill="#2a7a3a"/></g><g filter="url(#b4)"><path d="M1432 358L1452 370L1462 392L1480 378L1472 408L1454 432L1440 402Z" fill="#c4c02a"/><path d="M1588 376L1616 383L1620 408L1642 440L1612 427L1596 402Z" fill="#c4c02a"/><path d="M1596 486L1626 482L1602 500L1566 520L1540 540L1560 514Z" fill="#c4c02a"/><path d="M1440 480L1456 500L1450 540L1430 562L1436 520Z" fill="#c4c02a"/><path d="M1420 560L1450 575L1440 600L1416 590Z" fill="#c4c02a"/><path d="M1375 800L1410 795L1436 830L1432 872L1392 870L1380 840Z" fill="#c4c02a"/><path d="M1440 884L1520 880L1629 893L1628 905L1520 900L1440 905Z" fill="#c4c02a"/><path d="M1640 950L1660 960L1650 1070L1636 1075Z" fill="#c4c02a"/><ellipse cx="1481" cy="495" rx="5" ry="20" fill="#d82414"/><ellipse cx="1462" cy="530" rx="8" ry="10" fill="#e07a1c"/><path d="M1420 426L1408 455L1395 478L1380 520L1376 560" fill="none" stroke="#2eb044" stroke-width="5.5" stroke-linecap="round" stroke-linejoin="round"/><path d="M1455 400L1440 440L1420 480L1405 520" fill="none" stroke="#2eb044" stroke-width="5.5" stroke-linecap="round" stroke-linejoin="round"/><path d="M1660 440L1668 470L1672 505" fill="none" stroke="#2eb044" stroke-width="5.5" stroke-linecap="round" stroke-linejoin="round"/><path d="M1700 470L1680 490" fill="none" stroke="#2eb044" stroke-width="5.5" stroke-linecap="round" stroke-linejoin="round"/><path d="M1676 529L1700 522L1728 517" fill="none" stroke="#2eb044" stroke-width="5.5" stroke-linecap="round" stroke-linejoin="round"/><path d="M1676 754L1690 800L1686 850L1683 926L1690 960" fill="none" stroke="#2eb044" stroke-width="5.5" stroke-linecap="round" stroke-linejoin="round"/><path d="M1686 830L1740 840L1790 870L1820 900" fill="none" stroke="#2eb044" stroke-width="5.5" stroke-linecap="round" stroke-linejoin="round"/><path d="M1686 850L1640 870L1600 900L1560 930" fill="none" stroke="#2eb044" stroke-width="5.5" stroke-linecap="round" stroke-linejoin="round"/><path d="M1690 960L1740 985L1770 1050L1790 1070" fill="none" stroke="#2eb044" stroke-width="5.5" stroke-linecap="round" stroke-linejoin="round"/><path d="M1690 960L1660 1000L1640 1050" fill="none" stroke="#2eb044" stroke-width="5.5" stroke-linecap="round" stroke-linejoin="round"/><path d="M1330 350L1345 400" fill="none" stroke="#2eb044" stroke-width="5.5" stroke-linecap="round" stroke-linejoin="round"/><path d="M1700 960L1710 1020L1730 1070" fill="none" stroke="#2eb044" stroke-width="5.5" stroke-linecap="round" stroke-linejoin="round"/><path d="M1760 775L1770 800L1800 830" fill="none" stroke="#2eb044" stroke-width="5.5" stroke-linecap="round" stroke-linejoin="round"/><path d="M1522 758L1539 730L1584 706L1603 709L1591 735L1558 777L1539 784Z" fill="#8cd828"/><path d="M1440 730L1470 745L1440 780Z" fill="#70c030"/><path d="M1372 610L1396 580L1408 606L1440 618L1500 621L1560 623L1574 635L1500 634L1440 637L1404 650L1400 690L1378 694L1374 650Z" fill="#229c9c"/><ellipse cx="1392" cy="722" rx="34" ry="64" fill="#d0cc28"/><ellipse cx="1388" cy="722" rx="25" ry="56" fill="#40c850"/><ellipse cx="1383" cy="722" rx="15" ry="48" fill="#28b8c0"/><path d="M1668 752L1745 750L1772 728L1800 742L1790 772L1745 780L1700 790L1680 770Z" fill="#36c040"/><path d="M1622 494 L1660 503 L1676 529 L1681 548 L1693 569 L1700 602 L1719 631 L1740 659 L1759 683 L1771 706 L1764 730 L1745 749 L1707 754 L1664 746 L1645 725 L1626 697 L1612 673 L1593 657 L1574 635 L1560 621 L1556 580 L1556 536 L1563 524 L1582 505 L1598 496Z" fill="#44d03c" stroke="#44d03c" stroke-width="5" stroke-linejoin="round" /><path d="M1508 612 L1501 593 L1511 560 L1522 541 L1539 531 L1558 534 L1564 580 L1564 623Z" fill="#44d03c" stroke="#44d03c" stroke-width="5" stroke-linejoin="round" /><path d="M1512.6 604.8 L1506.8 589.2 L1515 562.1 L1524 546.5 L1538 538.3 L1553.6 540.8 L1558.5 578.5 L1558.5 613.8Z" fill="#2cc6b0" stroke="#2cc6b0" stroke-width="5" stroke-linejoin="round" /><path d="M1623.9 502.3 L1659.6 510.7 L1674.7 535.2 L1679.4 553 L1690.7 572.8 L1697.2 603.8 L1715.1 631.1 L1734.8 657.4 L1752.7 679.9 L1764 701.6 L1757.4 724.1 L1739.5 742 L1703.8 746.7 L1663.4 739.2 L1645.5 719.4 L1627.7 693.1 L1614.5 670.5 L1596.7 655.5 L1578.8 634.8 L1565.6 621.7 L1561.9 583.1 L1561.9 541.8 L1568.5 530.5 L1586.3 512.6 L1601.4 504.2Z" fill="#2cc6b0" stroke="#2cc6b0" stroke-width="5" stroke-linejoin="round" /><path d="M1728 517L1752 510L1735 541L1714 572L1721 598L1740 631L1764 671L1785 697L1800 712L1790 726L1771 706L1759 683L1740 659L1719 631L1700 602L1693 569L1700 545Z" fill="#54d434"/><path d="M1712 575L1722 600L1742 634L1764 672L1786 700L1776 710L1752 680L1730 645L1708 610L1700 580Z" fill="#e4cc28"/><path d="M1734 640L1754 672L1778 702L1770 708L1746 678L1726 646Z" fill="#e08a28"/><path d="M1752 510L1770 524L1822 526L1824 558L1844 572L1849 600L1846 636L1867 642L1869 671L1936 676L1936 695L1882 704L1849 706L1811 693L1785 697L1764 671L1740 631L1721 598L1714 572L1735 541Z" fill="#2ab0b6"/><path d="M1830 560L1849 600L1846 636L1867 642L1869 671L1936 676L1936 690L1880 690L1850 670L1830 620Z" fill="#2498a2"/><path d="M1785 697L1811 693L1849 706L1882 704L1936 695L1936 708L1882 716L1849 718L1811 706L1793 710Z" fill="#48d058"/><path d="M1800 712L1811 706L1849 718L1882 716L1936 708L1936 722L1882 730L1849 731L1815 722Z" fill="#c8dc30"/><path d="M1815 722L1849 731L1882 730L1936 722L1950 754L1929 770L1905 784L1870 782L1846 765L1832 742Z" fill="#d47e1e"/><path d="M1830 734L1849 738L1882 738L1940 730L1944 742L1882 750L1846 748Z" fill="#d8a822"/><ellipse cx="1898" cy="850" rx="31" ry="27" fill="#cc7620"/><ellipse cx="1968" cy="937" rx="22" ry="34" fill="#c46a20"/><ellipse cx="1972" cy="940" rx="11" ry="20" fill="#a8501c"/><path d="M1935 850L1960 870L1985 880L1985 890L1955 882L1930 862Z" fill="#c06a20"/></g><g filter="url(#b2)"><path d="M1625.8 510.6 L1659.3 518.5 L1673.4 541.4 L1677.8 558.1 L1688.3 576.6 L1694.5 605.6 L1711.2 631.1 L1729.7 655.8 L1746.4 676.9 L1757 697.1 L1750.8 718.2 L1734.1 735 L1700.6 739.4 L1662.8 732.3 L1646.1 713.8 L1629.4 689.2 L1617 668.1 L1600.3 654 L1583.6 634.6 L1571.3 622.3 L1567.8 586.2 L1567.8 547.5 L1573.9 537 L1590.6 520.2 L1604.7 512.3Z" fill="#36cccc" stroke="#36cccc" stroke-width="3" stroke-linejoin="round" /><path d="M1627.8 518.8 L1658.9 526.2 L1672 547.5 L1676.1 563.1 L1686 580.3 L1691.7 607.4 L1707.3 631.2 L1724.5 654.1 L1740.1 673.8 L1749.9 692.7 L1744.2 712.4 L1728.6 727.9 L1697.5 732 L1662.2 725.5 L1646.6 708.3 L1631 685.3 L1619.6 665.6 L1604 652.5 L1588.4 634.5 L1576.9 623 L1573.6 589.4 L1573.6 553.3 L1579.4 543.4 L1595 527.9 L1608.1 520.5Z" fill="#2ab6c6" stroke="#2ab6c6" stroke-width="3" stroke-linejoin="round" /><path d="M1629.7 527.1 L1658.6 534 L1670.7 553.7 L1674.5 568.2 L1683.6 584.1 L1689 609.2 L1703.4 631.2 L1719.4 652.5 L1733.8 670.8 L1742.9 688.2 L1737.6 706.5 L1723.2 720.9 L1694.3 724.7 L1661.6 718.6 L1647.2 702.7 L1632.7 681.4 L1622.1 663.2 L1607.6 651 L1593.2 634.3 L1582.6 623.6 L1579.5 592.5 L1579.5 559 L1584.8 549.9 L1599.3 535.5 L1611.4 528.6Z" fill="#3acad2" stroke="#3acad2" stroke-width="3" stroke-linejoin="round" /><path d="M1631.6 535.4 L1658.2 541.7 L1669.4 559.9 L1672.9 573.2 L1681.3 587.9 L1686.2 611 L1699.5 631.3 L1714.2 650.9 L1727.5 667.7 L1735.9 683.8 L1731 700.6 L1717.7 713.9 L1691.1 717.4 L1661 711.8 L1647.7 697.1 L1634.4 677.5 L1624.6 660.7 L1611.3 649.5 L1598 634.1 L1588.2 624.3 L1585.4 595.6 L1585.4 564.8 L1590.3 556.4 L1603.6 543.1 L1614.8 536.8Z" fill="#28aece" stroke="#28aece" stroke-width="3" stroke-linejoin="round" /><path d="M1633.5 543.7 L1657.8 549.4 L1668.1 566.1 L1671.3 578.2 L1679 591.7 L1683.4 612.8 L1695.6 631.4 L1709 649.3 L1721.2 664.6 L1728.9 679.4 L1724.4 694.7 L1712.2 706.9 L1687.9 710.1 L1660.4 705 L1648.2 691.5 L1636.1 673.6 L1627.1 658.2 L1615 648 L1602.8 633.9 L1593.8 625 L1591.3 598.7 L1591.3 570.6 L1595.8 562.9 L1607.9 550.7 L1618.2 545Z" fill="#34bedc" stroke="#34bedc" stroke-width="3" stroke-linejoin="round" /><path d="M1635.4 552 L1657.5 557.2 L1666.8 572.3 L1669.7 583.3 L1676.6 595.5 L1680.7 614.6 L1691.7 631.4 L1703.9 647.7 L1714.9 661.6 L1721.9 674.9 L1717.8 688.8 L1706.8 699.9 L1684.7 702.8 L1659.8 698.1 L1648.8 685.9 L1637.8 669.7 L1629.6 655.8 L1618.6 646.5 L1607.6 633.7 L1599.5 625.6 L1597.2 601.8 L1597.2 576.3 L1601.2 569.4 L1612.2 558.3 L1621.5 553.1Z" fill="#2aa4dc" stroke="#2aa4dc" stroke-width="3" stroke-linejoin="round" /><path d="M1517.6 596.7 L1513.3 584.9 L1519.5 564.5 L1526.3 552.7 L1536.9 546.5 L1548.6 548.3 L1552.4 576.9 L1552.4 603.5Z" fill="#38ccd4" stroke="#38ccd4" stroke-width="3" stroke-linejoin="round" /><path d="M1523.7 587 L1521.1 579.8 L1524.9 567.3 L1529.1 560.1 L1535.5 556.3 L1542.7 557.4 L1545 574.9 L1545 591.2Z" fill="#2cb4cc" stroke="#2cb4cc" stroke-width="3" stroke-linejoin="round" /><path d="M1621.3 529 L1649.1 543.6 L1663.7 584.5 L1673.9 632.7 L1697.3 678 L1717.7 718.8 L1722.1 743.7 L1704.6 751 L1687 736.4 L1656.4 702.8 L1628.6 667.7 L1600.9 632.7 L1587.8 591.8 L1593.6 556.8 L1608.2 536.3Z" fill="#2c90e0" stroke="#2c90e0" stroke-width="4" stroke-linejoin="round" /><path d="M1625.5 544.2 L1649.5 556.8 L1662.1 592.1 L1670.9 633.7 L1691.1 672.8 L1708.7 708 L1712.5 729.5 L1697.4 735.8 L1682.2 723.2 L1655.8 694.2 L1631.8 663.9 L1607.9 633.7 L1596.6 598.4 L1601.6 568.2 L1614.2 550.5Z" fill="#2470e4" stroke="#2470e4" stroke-width="4" stroke-linejoin="round" /><path d="M1629.3 557.9 L1649.8 568.7 L1660.6 599 L1668.2 634.6 L1685.5 668.1 L1700.6 698.3 L1703.8 716.7 L1690.9 722.1 L1677.9 711.3 L1655.2 686.4 L1634.7 660.5 L1614.2 634.6 L1604.5 604.4 L1608.8 578.4 L1619.6 563.3Z" fill="#1a4ce4" stroke="#1a4ce4" stroke-width="4" stroke-linejoin="round" /><path d="M1633.1 571.6 L1650.2 580.6 L1659.2 605.8 L1665.5 635.5 L1679.9 663.4 L1692.5 688.6 L1695.2 703.9 L1684.4 708.4 L1673.6 699.4 L1654.7 678.7 L1637.6 657.1 L1620.5 635.5 L1612.4 610.3 L1616 588.7 L1625 576.1Z" fill="#1030e0" stroke="#1030e0" stroke-width="4" stroke-linejoin="round" /><path d="M1635 591.5 L1645.5 597 L1651 612.4 L1654.8 630.5 L1663.7 647.5 L1671.3 663 L1673 672.3 L1666.4 675 L1659.8 669.5 L1648.2 656.9 L1637.8 643.7 L1627.3 630.5 L1622.4 615.1 L1624.6 601.9 L1630.1 594.2Z" fill="#0a1cc0" stroke="#0a1cc0" stroke-width="3" stroke-linejoin="round" /><path d="M1760 545L1745 572L1752 600L1772 636L1796 672L1830 690L1880 692L1930 684M1786 545L1772 575L1780 604L1800 640L1824 668L1860 680L1930 672M1810 548L1800 580L1808 610L1826 640L1850 658" fill="none" stroke="#50dcd8" stroke-width="1.6"/></g></g><g filter="url(#spy)"><path d="M1622.3 495.4 L1659.9 504.3 L1675.8 530 L1680.7 548.8 L1692.6 569.6 L1699.5 602.3 L1718.3 631 L1739.1 658.7 L1758 682.5 L1769.8 705.3 L1762.9 729 L1744.1 747.8 L1706.5 752.8 L1663.9 744.9 L1645.1 724.1 L1626.3 696.4 L1612.4 672.6 L1593.6 656.8 L1574.8 635 L1560.9 621.1 L1557 580.5 L1557 537 L1563.9 525.1 L1582.7 506.3 L1598.6 497.4Z" fill="#000" stroke="#000" stroke-width="5" stroke-linejoin="round" /><path d="M1509.3 610 L1502.6 591.9 L1512.1 560.6 L1522.6 542.5 L1538.7 533 L1556.8 535.9 L1562.5 579.6 L1562.5 620.4Z" fill="#000" stroke="#000" stroke-width="5" stroke-linejoin="round" /><path d="M1752 510L1770 524L1822 526L1824 558L1844 572L1849 600L1846 636L1867 642L1869 671L1936 676L1936 695L1882 704L1849 706L1811 693L1785 697L1764 671L1740 631L1721 598L1714 572L1735 541Z" fill="#000" fill-opacity="0.72"/><path d="M1668 752L1745 750L1772 728L1800 742L1790 772L1745 780L1700 790L1680 770Z" fill="#000" fill-opacity="0.45"/><path d="M1372 610L1396 580L1408 606L1440 618L1500 621L1560 623L1574 635L1500 634L1440 637L1404 650L1400 690L1378 694L1374 650Z" fill="#000" fill-opacity="0.3"/><path d="M1728 517L1752 510L1735 541L1714 572L1721 598L1740 631L1764 671L1785 697L1800 712L1790 726L1771 706L1759 683L1740 659L1719 631L1700 602L1693 569L1700 545Z" fill="#000" fill-opacity="0.7"/><path d="M1785 697L1811 693L1849 706L1882 704L1936 695L1936 708L1882 716L1849 718L1811 706L1793 710Z" fill="#000"/><path d="M1800 712L1811 706L1849 718L1882 716L1936 708L1936 722L1882 730L1849 731L1815 722Z" fill="#000"/><path d="M1815 722L1849 731L1882 730L1936 722L1950 754L1929 770L1905 784L1870 782L1846 765L1832 742Z" fill="#000" fill-opacity="0.75"/><ellipse cx="1898" cy="850" rx="29" ry="25" fill="#000" fill-opacity="0.7"/><ellipse cx="1968" cy="937" rx="20" ry="31" fill="#000" fill-opacity="0.6"/><ellipse cx="1388" cy="722" rx="28" ry="58" fill="#000" fill-opacity="0.8"/><path d="M1522 758L1539 730L1584 706L1603 709L1591 735L1558 777L1539 784Z" fill="#000" fill-opacity="0.75"/><path d="M1375 800L1410 795L1436 830L1432 872L1392 870L1380 840Z" fill="#000" fill-opacity="0.5"/><path d="M1676 754L1690 800L1686 850L1683 926L1690 960" fill="none" stroke="#000" stroke-opacity="0.35" stroke-width="6"/><path d="M1686 850L1640 870L1600 900" fill="none" stroke="#000" stroke-opacity="0.35" stroke-width="6"/><path d="M1686 830L1740 840L1790 870" fill="none" stroke="#000" stroke-opacity="0.35" stroke-width="6"/><rect x="1300" y="300" width="1" height="1" fill="#000" fill-opacity="0.01"/><rect x="2019" y="1099" width="1" height="1" fill="#000" fill-opacity="0.01"/></g><g filter="url(#spk)"><path d="M1622.3 495.4 L1659.9 504.3 L1675.8 530 L1680.7 548.8 L1692.6 569.6 L1699.5 602.3 L1718.3 631 L1739.1 658.7 L1758 682.5 L1769.8 705.3 L1762.9 729 L1744.1 747.8 L1706.5 752.8 L1663.9 744.9 L1645.1 724.1 L1626.3 696.4 L1612.4 672.6 L1593.6 656.8 L1574.8 635 L1560.9 621.1 L1557 580.5 L1557 537 L1563.9 525.1 L1582.7 506.3 L1598.6 497.4Z" fill="#000" stroke="#000" stroke-width="5" stroke-linejoin="round" /><path d="M1509.3 610 L1502.6 591.9 L1512.1 560.6 L1522.6 542.5 L1538.7 533 L1556.8 535.9 L1562.5 579.6 L1562.5 620.4Z" fill="#000" stroke="#000" stroke-width="5" stroke-linejoin="round" /><path d="M1752 510L1770 524L1822 526L1824 558L1844 572L1849 600L1846 636L1867 642L1869 671L1936 676L1936 695L1882 704L1849 706L1811 693L1785 697L1764 671L1740 631L1721 598L1714 572L1735 541Z" fill="#000" fill-opacity="0.72"/><path d="M1668 752L1745 750L1772 728L1800 742L1790 772L1745 780L1700 790L1680 770Z" fill="#000" fill-opacity="0.45"/><path d="M1372 610L1396 580L1408 606L1440 618L1500 621L1560 623L1574 635L1500 634L1440 637L1404 650L1400 690L1378 694L1374 650Z" fill="#000" fill-opacity="0.3"/><path d="M1728 517L1752 510L1735 541L1714 572L1721 598L1740 631L1764 671L1785 697L1800 712L1790 726L1771 706L1759 683L1740 659L1719 631L1700 602L1693 569L1700 545Z" fill="#000" fill-opacity="0.7"/><path d="M1785 697L1811 693L1849 706L1882 704L1936 695L1936 708L1882 716L1849 718L1811 706L1793 710Z" fill="#000"/><path d="M1800 712L1811 706L1849 718L1882 716L1936 708L1936 722L1882 730L1849 731L1815 722Z" fill="#000"/><path d="M1815 722L1849 731L1882 730L1936 722L1950 754L1929 770L1905 784L1870 782L1846 765L1832 742Z" fill="#000" fill-opacity="0.75"/><ellipse cx="1898" cy="850" rx="29" ry="25" fill="#000" fill-opacity="0.7"/><ellipse cx="1968" cy="937" rx="20" ry="31" fill="#000" fill-opacity="0.6"/><ellipse cx="1388" cy="722" rx="28" ry="58" fill="#000" fill-opacity="0.8"/><path d="M1522 758L1539 730L1584 706L1603 709L1591 735L1558 777L1539 784Z" fill="#000" fill-opacity="0.75"/><path d="M1375 800L1410 795L1436 830L1432 872L1392 870L1380 840Z" fill="#000" fill-opacity="0.5"/><path d="M1676 754L1690 800L1686 850L1683 926L1690 960" fill="none" stroke="#000" stroke-opacity="0.35" stroke-width="6"/><path d="M1686 850L1640 870L1600 900" fill="none" stroke="#000" stroke-opacity="0.35" stroke-width="6"/><path d="M1686 830L1740 840L1790 870" fill="none" stroke="#000" stroke-opacity="0.35" stroke-width="6"/><rect x="1300" y="300" width="1" height="1" fill="#000" fill-opacity="0.01"/><rect x="2019" y="1099" width="1" height="1" fill="#000" fill-opacity="0.01"/></g></g></svg>
<div style="left:1239px;top:186px;width:29.700000000000045px;height:28px;border-radius:5px;background:linear-gradient(#fdd796,#fbbf5c 55%,#fcc973);"></div><div style="left:1271.05px;top:186px;width:29.700000000000045px;height:28px;border-radius:5px;background:linear-gradient(#fdd796,#fbbf5c 55%,#fcc973);"></div><div style="left:1303.1px;top:186px;width:29.700000000000045px;height:28px;border-radius:5px;background:#fff;"></div><div style="left:1335.15px;top:186px;width:29.700000000000045px;height:28px;border-radius:5px;background:#fff;"></div><div style="left:1367.2px;top:186px;width:29.700000000000045px;height:28px;border-radius:5px;background:#fff;"></div><div style="left:1399.25px;top:186px;width:29.700000000000045px;height:28px;border-radius:5px;background:#fff;"></div><div style="left:1431.3px;top:186px;width:29.700000000000045px;height:28px;border-radius:5px;background:#fff;"></div><div style="left:1463.35px;top:186px;width:29.700000000000045px;height:28px;border-radius:5px;background:#fff;"></div><div style="left:1495.4px;top:186px;width:29.700000000000045px;height:28px;border-radius:5px;background:#fff;"></div><div style="left:1527.45px;top:186px;width:29.700000000000045px;height:28px;border-radius:5px;background:#fff;"></div><div style="left:1559.5px;top:186px;width:29.700000000000045px;height:28px;border-radius:5px;background:#fff;"></div><div style="left:1596px;top:186px;width:30px;height:28px;border-radius:5px;background:linear-gradient(#fdd796,#fbbf5c 55%,#fcc973);"></div><div style="left:1628px;top:186px;width:30px;height:28px;border-radius:5px;background:#fff;"></div><div style="left:1660px;top:186px;width:30px;height:28px;border-radius:5px;background:#fff;"></div><div style="left:1697px;top:186px;width:30px;height:28px;border-radius:5px;background:#fff;"></div><div style="left:1729px;top:186px;width:40px;height:28px;border-radius:5px;background:#fff;"></div><div style="left:1771px;top:186px;width:30px;height:28px;border-radius:5px;background:linear-gradient(#fdd796,#fbbf5c 55%,#fcc973);"></div><div style="left:1803px;top:186px;width:40px;height:28px;border-radius:5px;background:#fff;"></div><div style="left:1850px;top:186px;width:30px;height:28px;border-radius:5px;background:#fff;"></div><div style="left:1882px;top:186px;width:40px;height:28px;border-radius:5px;background:#fff;"></div><div style="left:1924px;top:186px;width:30px;height:28px;border-radius:5px;background:#fff;"></div><svg style="left:1237px;top:184px" width="730" height="40" viewBox="1237 184 730 40"><defs><linearGradient id="og3" x1="0" y1="0" x2="0" y2="1"><stop offset="0" stop-color="#f39a1f"/><stop offset="1" stop-color="#f15a22"/></linearGradient><linearGradient id="rbh" x1="0" y1="0" x2="1" y2="0"><stop offset="0" stop-color="#e0301c"/><stop offset="0.25" stop-color="#f0901c"/><stop offset="0.45" stop-color="#e8d820"/><stop offset="0.6" stop-color="#40b040"/><stop offset="0.8" stop-color="#3060d0"/><stop offset="1" stop-color="#8030b0"/></linearGradient></defs><rect x="1246" y="191.6" width="9.4" height="3.3" fill="#1aa0dc"/><rect x="1246" y="194.6" width="9.4" height="3.3" fill="#3cc068"/><rect x="1246" y="197.6" width="9.4" height="3.3" fill="#b8d830"/><rect x="1246" y="200.6" width="9.4" height="3.3" fill="#f8d020"/><rect x="1246" y="203.6" width="9.4" height="3.3" fill="#f89820"/><rect x="1246" y="206.6" width="9.4" height="3.3" fill="#f05a20"/><path d="M1259.5 191.8h5" stroke="#888" stroke-width="1"/><path d="M1259 209h6" stroke="#111" stroke-width="1.8"/><path d="M1262 194v12.5" stroke="#ee7d2b" stroke-width="1.2"/><path d="M1262 192.6l2.2 3.2h-4.4zM1262 207.6l2.2-3.2h-4.4z" fill="#ee7d2b"/><rect x="1278.05" y="191.6" width="9.4" height="3.9" fill="#dcdcdc"/><rect x="1278.05" y="195.2" width="9.4" height="3.9" fill="#c4c4c4"/><rect x="1278.05" y="198.8" width="9.4" height="3.9" fill="#aaaaaa"/><rect x="1278.05" y="202.4" width="9.4" height="3.9" fill="#909090"/><rect x="1278.05" y="206" width="9.4" height="3.9" fill="#787878"/><path d="M1290.05 209.6l4-16 2.5 16z" fill="#e07a28" stroke="#8a4a18" stroke-width="0.6"/><rect x="1310.1" y="191.6" width="8" height="3.3" fill="#40b848"/><rect x="1310.1" y="194.6" width="8" height="3.3" fill="#d8e030"/><rect x="1310.1" y="197.6" width="8" height="3.3" fill="#f8a020"/><rect x="1310.1" y="200.6" width="8" height="3.3" fill="#f04828"/><rect x="1310.1" y="203.6" width="8" height="3.3" fill="#c038a0"/><rect x="1310.1" y="206.6" width="8" height="3.3" fill="#8040c0"/><text x="1320.1" y="209.4" font-size="23.5" font-family='"Liberation Sans",sans-serif' fill="#333" stroke="#333" stroke-width="0.5" textLength="9.6" lengthAdjust="spacingAndGlyphs">N</text><rect x="1342.15" y="191.6" width="8" height="3.3" fill="#f08020"/><rect x="1342.15" y="194.6" width="8" height="3.3" fill="#e8d828"/><rect x="1342.15" y="197.6" width="8" height="3.3" fill="#48b848"/><rect x="1342.15" y="200.6" width="8" height="3.3" fill="#28a8d8"/><rect x="1342.15" y="203.6" width="8" height="3.3" fill="#3858d0"/><rect x="1342.15" y="206.6" width="8" height="3.3" fill="#7838b0"/><text x="1352.15" y="209.4" font-size="23.5" font-family='"Liberation Sans",sans-serif' fill="#333" stroke="#333" stroke-width="0.5" textLength="10.2" lengthAdjust="spacingAndGlyphs">R</text><rect x="1374.2" y="191.6" width="8" height="3.9" fill="#20a0e8"/><rect x="1374.2" y="195.2" width="8" height="3.9" fill="#30a8c0"/><rect x="1374.2" y="198.8" width="8" height="3.9" fill="#48b070"/><rect x="1374.2" y="202.4" width="8" height="3.9" fill="#68b848"/><rect x="1374.2" y="206" width="8" height="3.9" fill="#78b840"/><text x="1384.2" y="209.4" font-size="23.5" font-family='"Liberation Sans",sans-serif' fill="#444" stroke="#444" stroke-width="0.5" textLength="9.8" lengthAdjust="spacingAndGlyphs">P</text><rect x="1406.25" y="191.6" width="8" height="3.3" fill="#d8d8d8"/><rect x="1406.25" y="194.6" width="8" height="3.3" fill="#c0c0c0"/><rect x="1406.25" y="197.6" width="8" height="3.3" fill="#a8a8a8"/><rect x="1406.25" y="200.6" width="8" height="3.3" fill="#f8a828"/><rect x="1406.25" y="203.6" width="8" height="3.3" fill="#f07820"/><rect x="1406.25" y="206.6" width="8" height="3.3" fill="#f05a20"/><path d="M1416.25 209.5h1.6v-17.5h3.4v17.5h3.4v-17.5" fill="none" stroke="#444" stroke-width="1.3"/><path d="M1445.8 200.5L1445.8 192.1A8.4 8.4 0 0 1 1451.84 194.66Z" fill="#f04020"/><path d="M1445.8 200.5L1451.74 194.56A8.4 8.4 0 0 1 1454.2 200.65Z" fill="#f89020"/><path d="M1445.8 200.5L1454.2 200.5A8.4 8.4 0 0 1 1451.64 206.54Z" fill="#f8d020"/><path d="M1445.8 200.5L1451.74 206.44A8.4 8.4 0 0 1 1445.65 208.9Z" fill="#58c040"/><path d="M1445.8 200.5L1445.8 208.9A8.4 8.4 0 0 1 1439.76 206.34Z" fill="#20a0d8"/><path d="M1445.8 200.5L1439.86 206.44A8.4 8.4 0 0 1 1437.4 200.35Z" fill="#3050d0"/><path d="M1445.8 200.5L1437.4 200.5A8.4 8.4 0 0 1 1439.96 194.46Z" fill="#8030c0"/><path d="M1445.8 200.5L1439.86 194.56A8.4 8.4 0 0 1 1445.95 192.1Z" fill="#d03090"/><rect x="1446.8" y="201.5" width="12" height="8" fill="#fff"/><text x="1447.3" y="208.5" font-size="5.8" font-weight="bold" textLength="10.5" lengthAdjust="spacingAndGlyphs" font-family='"Liberation Sans",sans-serif' fill="#444">RGB</text><rect x="1470.35" y="191.6" width="8" height="3.3" fill="#1aa0dc"/><rect x="1470.35" y="194.6" width="8" height="3.3" fill="#3cc068"/><rect x="1470.35" y="197.6" width="8" height="3.3" fill="#b8d830"/><rect x="1470.35" y="200.6" width="8" height="3.3" fill="#f8d020"/><rect x="1470.35" y="203.6" width="8" height="3.3" fill="#f89820"/><rect x="1470.35" y="206.6" width="8" height="3.3" fill="#f05a20"/><path d="M1480.85 199l7-6.5M1480.85 204l7-6.5M1480.85 209l7-6.5" stroke="#333" stroke-width="1.6"/><path d="M1502.4 194.5h16" stroke="#ee7d2b" stroke-width="1.4"/><rect x="1505.4" y="193" width="5" height="3" fill="#ee7d2b"/><path d="M1502.4 200.5h16M1502.4 206.5h16" stroke="#333" stroke-width="1.4"/><rect x="1510.4" y="199" width="5" height="3" fill="#333"/><rect x="1504.4" y="205" width="5" height="3" fill="#333"/><rect x="1533.45" y="194" width="18.5" height="12" fill="url(#rbh)"/><circle cx="1579.5" cy="195" r="2" fill="#ee7d2b"/><circle cx="1570" cy="195" r="0.7" fill="#ee7d2b"/><path d="M1567.5 205h15" stroke="#555" stroke-width="1.4"/><path d="M1565 205l3.6-2.6v5.2zM1585 205l-3.6-2.6v5.2z" fill="#333"/><path d="M1608 193.3L1615.6 200.1M1616 193.3L1608.4 200.1" stroke="#ee7d2b" stroke-width="1.3"/><circle cx="1607.84" cy="200.98" r="1.36" fill="none" stroke="#ee7d2b" stroke-width="1.1"/><circle cx="1616.16" cy="200.98" r="1.36" fill="none" stroke="#ee7d2b" stroke-width="1.1"/><path d="M1605 207.5h13" stroke="#666" stroke-width="1.3"/><path d="M1602.5 207.5l3.4-2.4v4.8zM1620.5 207.5l-3.4-2.4v4.8z" fill="#555"/><path d="M1638 194.5v13" stroke="#444" stroke-width="1.4"/><path d="M1638 191.5l2.6 3.6h-5.2zM1638 210.5l2.6-3.6h-5.2z" fill="#333"/><path d="M1644 199.8L1651.6 206.6M1652 199.8L1644.4 206.6" stroke="#ee7d2b" stroke-width="1.3"/><circle cx="1643.84" cy="207.48" r="1.36" fill="none" stroke="#ee7d2b" stroke-width="1.1"/><circle cx="1652.16" cy="207.48" r="1.36" fill="none" stroke="#ee7d2b" stroke-width="1.1"/><path d="M1668 195L1677.5 203.5M1678 195L1668.5 203.5" stroke="#b8b8b8" stroke-width="1.3"/><circle cx="1667.8" cy="204.6" r="1.7" fill="none" stroke="#b8b8b8" stroke-width="1.1"/><circle cx="1678.2" cy="204.6" r="1.7" fill="none" stroke="#b8b8b8" stroke-width="1.1"/><circle cx="1681.5" cy="207" r="2.3" fill="none" stroke="#a0a0a0" stroke-width="1.8" stroke-dasharray="1.3 0.8"/><rect x="1708" y="194.5" width="11" height="11" fill="url(#og3)"/><path d="M1703 193.5h17.5v15.5M1706.5 191v16h16.5" fill="none" stroke="#333" stroke-width="1.4"/><g transform="rotate(-38 1743.5 200.5)"><rect x="1734" y="197.5" width="19" height="6.5" fill="#fff" stroke="#333" stroke-width="1.4"/><path d="M1737 201v3M1740 201v3M1743 201v3M1746 201v3M1749 201v3" stroke="#ee7d2b" stroke-width="1.1"/></g><path d="M1757 197.5h9l-4.5 5z" fill="#000"/><path d="M1777 205c5 0 6-1.5 9-5s5-6 9-5.5" fill="none" stroke="#ee7d2b" stroke-width="1.2"/><circle cx="1778.5" cy="203" r="1.1" fill="#333"/><circle cx="1781" cy="206" r="1.1" fill="#333"/><circle cx="1791" cy="195" r="1.1" fill="#333"/><circle cx="1793.5" cy="198.5" r="1.1" fill="#333"/><circle cx="1795.5" cy="203" r="1.1" fill="#333"/><path d="M1810 200.5c4-7.6 13-7.6 17 0c-4 7.6-13 7.6-17 0z" fill="#ee7d2b"/><circle cx="1818.5" cy="200.5" r="3.6" fill="#fff"/><circle cx="1818.5" cy="200.5" r="2.1" fill="#3a3340"/><path d="M1831 197.5h9l-4.5 5z" fill="#000"/><text x="1858.5" y="204.5" font-size="10" font-weight="bold" font-family='"Liberation Sans",sans-serif' fill="#444" textLength="12.5" lengthAdjust="spacingAndGlyphs">3D</text><path d="M1867 191.5c5 1 8 5 7 10" fill="none" stroke="#ee7d2b" stroke-width="1.3"/><path d="M1863 209.5c-5-1-8-5-7-10" fill="none" stroke="#ee7d2b" stroke-width="1.3"/><path d="M1874.5 203l-2.6-2.6h4zM1855.5 198l2.6 2.6h-4z" fill="#ee7d2b"/><rect x="1889.5" y="196" width="13.5" height="13.5" fill="url(#og3)" stroke="#7a4a28" stroke-width="0.6"/><path d="M1889.5 196l3.5-3.6h13.5l-3.5 3.6M1906.5 192.4v13.5l-3.5 3.6" fill="#fff" stroke="#333" stroke-width="1.1"/><path d="M1910 197.5h9l-4.5 5z" fill="#000"/><circle cx="1939" cy="200.5" r="2.3" fill="#ee7d2b"/><path d="M1934 196.5a6.4 6.4 0 0 0 0 8M1944 196.5a6.4 6.4 0 0 1 0 8M1935 195.5a6.4 6.4 0 0 1 8 0M1935 205.5a6.4 6.4 0 0 0 8 0" fill="none" stroke="#333" stroke-width="1.3"/><path d="M1939 188.5v5M1939 207.5v5M1927.5 200.5h5M1945.5 200.5h5" stroke="#333" stroke-width="1.3"/><path d="M1620.5 199.5v15.5l3.6-3.4 2.6 5.8 2.4-1.1-2.6-5.6h5z" fill="#fff" stroke="#000" stroke-width="1"/></svg>
<div style="left:2125px;top:158px;width:433px;height:25px;background:#e4e5e6;"></div><div class="t" style="left:2130px;top:160.5px;height:20px;line-height:20px;font-size:13px;color:#1b1b1b;">GCP</div><svg style="left:2520px;top:165.5px" width="10" height="10" viewBox="0 0 10 10"><path d="M3 0.8h6v5h-2.2M0.8 3.6h6v5.6h-6z" fill="none" stroke="#222" stroke-width="1.5"/></svg><svg style="left:2543px;top:166.5px" width="9" height="9" viewBox="0 0 9 9"><path d="M0.8 0.8L8.2 8.2M8.2 0.8L0.8 8.2" stroke="#222" stroke-width="1.8"/></svg><div class="btn" style="left:2125px;top:183px;width:214px;height:21.5px;"></div><div class="t" style="left:2032px;width:400px;text-align:center;top:184.5px;height:20px;line-height:20px;font-size:13px;color:#1b1b1b;">Import GCP</div><div class="btn" style="left:2345px;top:183px;width:214px;height:21.5px;"></div><div class="t" style="left:2252px;width:400px;text-align:center;top:184.5px;height:20px;line-height:20px;font-size:13px;color:#1b1b1b;">Add GCP</div><div style="left:2131px;top:213.5px;width:13px;height:13px;border:1px solid #333;background:#fff;"></div><div class="t" style="left:2150.5px;top:209.7px;height:20px;line-height:20px;font-size:12.6px;color:#1b1b1b;">Display GCP in POS range</div><div class="t" style="left:2133.5px;top:236px;height:20px;line-height:20px;font-size:13px;color:#1b1b1b;">Query:</div><div style="left:2185px;top:234.5px;width:376px;height:21px;border:1px solid #7a7a7a;background:#fff;"></div><div style="left:2125px;top:262px;width:435px;height:1047px;border:1px solid #8c8c8c;background:#fff;"></div><div style="left:2126.5px;top:263px;width:432px;height:21.5px;background:linear-gradient(#f2f2f2,#e6e6e6);border-bottom:1px solid #d0d0d0;"></div><div style="left:2226px;top:263px;width:1px;height:21.5px;background:#cfcfcf;"></div><div style="left:2325.5px;top:263px;width:1px;height:21.5px;background:#cfcfcf;"></div><div style="left:2426px;top:263px;width:1px;height:21.5px;background:#cfcfcf;"></div><div class="t" style="left:1975.5px;width:400px;text-align:center;top:264.5px;height:20px;line-height:20px;font-size:13px;color:#1b1b1b;">Name (ID)</div><div class="t" style="left:2076px;width:400px;text-align:center;top:264.5px;height:20px;line-height:20px;font-size:13px;color:#1b1b1b;">Type</div><div class="t" style="left:2176px;width:400px;text-align:center;top:264.5px;height:20px;line-height:20px;font-size:13px;color:#1b1b1b;">Refine Type</div><div class="t" style="left:2291.5px;width:400px;text-align:center;top:264.5px;height:20px;line-height:20px;font-size:13px;color:#1b1b1b;">Project Name</div><div class="btn" style="left:2125px;top:1315px;width:434px;height:21.5px;"></div><div class="t" style="left:2142px;width:400px;text-align:center;top:1316.5px;height:20px;line-height:20px;font-size:13px;color:#1b1b1b;">Height Matching</div><div class="btn" style="left:2125px;top:1343px;width:214px;height:21.5px;"></div><div class="t" style="left:2031.5px;width:400px;text-align:center;top:1344.5px;height:20px;line-height:20px;font-size:13px;color:#1b1b1b;">GCP Picture</div><div class="btn" style="left:2345px;top:1343px;width:214px;height:21.5px;"></div><div class="t" style="left:2252px;width:400px;text-align:center;top:1344.5px;height:20px;line-height:20px;font-size:13px;color:#1b1b1b;">Matched Point Check</div>
<div style="left:337px;top:1157px;width:1784px;height:24px;background:#e4e5e6;"></div><div class="t" style="left:341px;top:1158.5px;height:20px;line-height:20px;font-size:13px;color:#1b1b1b;">Output</div><svg style="left:2082px;top:1163.5px" width="10" height="10" viewBox="0 0 10 10"><path d="M3 0.8h6v5h-2.2M0.8 3.6h6v5.6h-6z" fill="none" stroke="#222" stroke-width="1.5"/></svg><svg style="left:2105px;top:1164.5px" width="9" height="9" viewBox="0 0 9 9"><path d="M0.8 0.8L8.2 8.2M8.2 0.8L0.8 8.2" stroke="#222" stroke-width="1.8"/></svg><div style="left:337px;top:1181px;width:80px;height:26.5px;background:linear-gradient(#fdd796 0%,#fcc469 45%,#fbbd58 55%,#fcc973 100%);"></div><div style="left:418px;top:1181px;width:99.5px;height:26.5px;background:linear-gradient(#fdd796 0%,#fcc469 45%,#fbbd58 55%,#fcc973 100%);"></div><div style="left:518.5px;top:1181px;width:115px;height:26.5px;background:linear-gradient(#fdd796 0%,#fcc469 45%,#fbbd58 55%,#fcc973 100%);"></div><svg style="left:337px;top:1181px" width="300" height="28" viewBox="337 1181 300 28"><circle cx="350.8" cy="1194.5" r="8" fill="#e0201c"/><path d="M347.3 1191l7 7M354.3 1191l-7 7" stroke="#fff" stroke-width="1.8"/><path d="M431.5 1185.5l9 16.5h-18z" fill="#f8a31c"/><path d="M431.5 1190.5v6.5" stroke="#fbc469" stroke-width="1.6"/><circle cx="431.5" cy="1199.3" r="0.9" fill="#fbc469"/><circle cx="531.5" cy="1194.5" r="8" fill="#1e86e0"/><circle cx="531.5" cy="1190.9" r="1.36" fill="#fff"/><rect x="530.22" y="1193.3" width="2.56" height="5.76" fill="#fff"/></svg><div class="t" style="left:365px;top:1184.5px;height:20px;line-height:20px;font-size:13px;color:#1b1b1b;">0 Error</div><div class="t" style="left:446px;top:1184.5px;height:20px;line-height:20px;font-size:13px;color:#1b1b1b;">0 Warning</div><div class="t" style="left:546.5px;top:1184.5px;height:20px;line-height:20px;font-size:13px;color:#1b1b1b;">35 Messages</div><div style="left:337px;top:1209px;width:1784px;height:156px;border:1px solid #8c8c8c;background:#fff;"></div><div style="left:338px;top:1213px;width:1766.5px;height:1px;background:#dcdcdc;"></div><div style="left:338px;top:1238px;width:1766.5px;height:1px;background:#dcdcdc;"></div><div style="left:338px;top:1263px;width:1766.5px;height:1px;background:#dcdcdc;"></div><div style="left:338px;top:1288px;width:1766.5px;height:1px;background:#dcdcdc;"></div><div style="left:338px;top:1313px;width:1766.5px;height:1px;background:#dcdcdc;"></div><div style="left:338px;top:1338px;width:1766.5px;height:1px;background:#dcdcdc;"></div><div style="left:437px;top:1210px;width:1px;height:154px;background:#e2e2e2;"></div><div style="left:2104px;top:1210px;width:1px;height:154px;background:#dcdcdc;"></div><div class="t" style="left:363.5px;top:1217px;height:20px;line-height:20px;font-size:13px;color:#1b1b1b;">Message</div><div class="t" style="left:438.5px;top:1217px;height:20px;line-height:20px;font-size:13.05px;color:#1b1b1b;">2023-11-17 14:57:00  [@@2023-11-02-063140] Loading trajectory...</div><div class="t" style="left:363.5px;top:1242px;height:20px;line-height:20px;font-size:13px;color:#1b1b1b;">Message</div><div class="t" style="left:438.5px;top:1242px;height:20px;line-height:20px;font-size:13.05px;color:#1b1b1b;">2023-11-17 14:57:03  [@@2023-11-02-063140] Trajectory loading completed.</div><div class="t" style="left:363.5px;top:1267px;height:20px;line-height:20px;font-size:13px;color:#1b1b1b;">Message</div><div class="t" style="left:438.5px;top:1267px;height:20px;line-height:20px;font-size:13.05px;color:#1b1b1b;">2023-11-17 14:57:03  [@@2023-11-02-082821] Loading trajectory...</div><div class="t" style="left:363.5px;top:1292px;height:20px;line-height:20px;font-size:13px;color:#1b1b1b;">Message</div><div class="t" style="left:438.5px;top:1292px;height:20px;line-height:20px;font-size:13.05px;color:#1b1b1b;">2023-11-17 14:57:07  [@@2023-11-02-082821] Trajectory loading completed.</div><div class="t" style="left:363.5px;top:1317px;height:20px;line-height:20px;font-size:13px;color:#1b1b1b;">Message</div><div class="t" style="left:438.5px;top:1317px;height:20px;line-height:20px;font-size:13.05px;color:#1b1b1b;">2023-11-17 14:57:07  [@@2023-11-03-025422] Loading trajectory...</div><div class="t" style="left:363.5px;top:1342px;height:20px;line-height:20px;font-size:13px;color:#1b1b1b;">Message</div><div class="t" style="left:438.5px;top:1342px;height:20px;line-height:20px;font-size:13.05px;color:#1b1b1b;">2023-11-17 14:57:10  [@@2023-11-03-025422] Trajectory loading completed.</div><svg style="left:340px;top:1214px" width="20" height="150" viewBox="340 1214 20 150"><circle cx="349" cy="1226.3" r="5.5" fill="#1e86e0"/><circle cx="349" cy="1223.83" r="0.94" fill="#fff"/><rect x="348.12" y="1225.47" width="1.76" height="3.96" fill="#fff"/><circle cx="349" cy="1251.3" r="5.5" fill="#1e86e0"/><circle cx="349" cy="1248.83" r="0.94" fill="#fff"/><rect x="348.12" y="1250.47" width="1.76" height="3.96" fill="#fff"/><circle cx="349" cy="1276.3" r="5.5" fill="#1e86e0"/><circle cx="349" cy="1273.83" r="0.94" fill="#fff"/><rect x="348.12" y="1275.47" width="1.76" height="3.96" fill="#fff"/><circle cx="349" cy="1301.3" r="5.5" fill="#1e86e0"/><circle cx="349" cy="1298.83" r="0.94" fill="#fff"/><rect x="348.12" y="1300.47" width="1.76" height="3.96" fill="#fff"/><circle cx="349" cy="1326.3" r="5.5" fill="#1e86e0"/><circle cx="349" cy="1323.83" r="0.94" fill="#fff"/><rect x="348.12" y="1325.47" width="1.76" height="3.96" fill="#fff"/><circle cx="349" cy="1351.3" r="5.5" fill="#1e86e0"/><circle cx="349" cy="1348.83" r="0.94" fill="#fff"/><rect x="348.12" y="1350.47" width="1.76" height="3.96" fill="#fff"/></svg><svg style="left:2104px;top:1210px" width="17" height="154" viewBox="2104 1210 17 154"><path d="M2107.5 1220.5l4.5-6 4.5 6M2107.5 1353l4.5 6 4.5-6" fill="none" stroke="#555" stroke-width="1.1"/><rect x="2107" y="1328" width="11" height="20.5" fill="#d6d6d6"/></svg>
<div class="t" style="left:11px;top:1368.9px;height:20px;line-height:20px;font-size:12.85px;color:#1b1b1b;">Coordinate System: WGS84 / Gaussian Projection / 111E</div><div style="left:347px;top:1368px;width:1px;height:22px;background:#e0e0e0;"></div>
</div>
</body></html>
